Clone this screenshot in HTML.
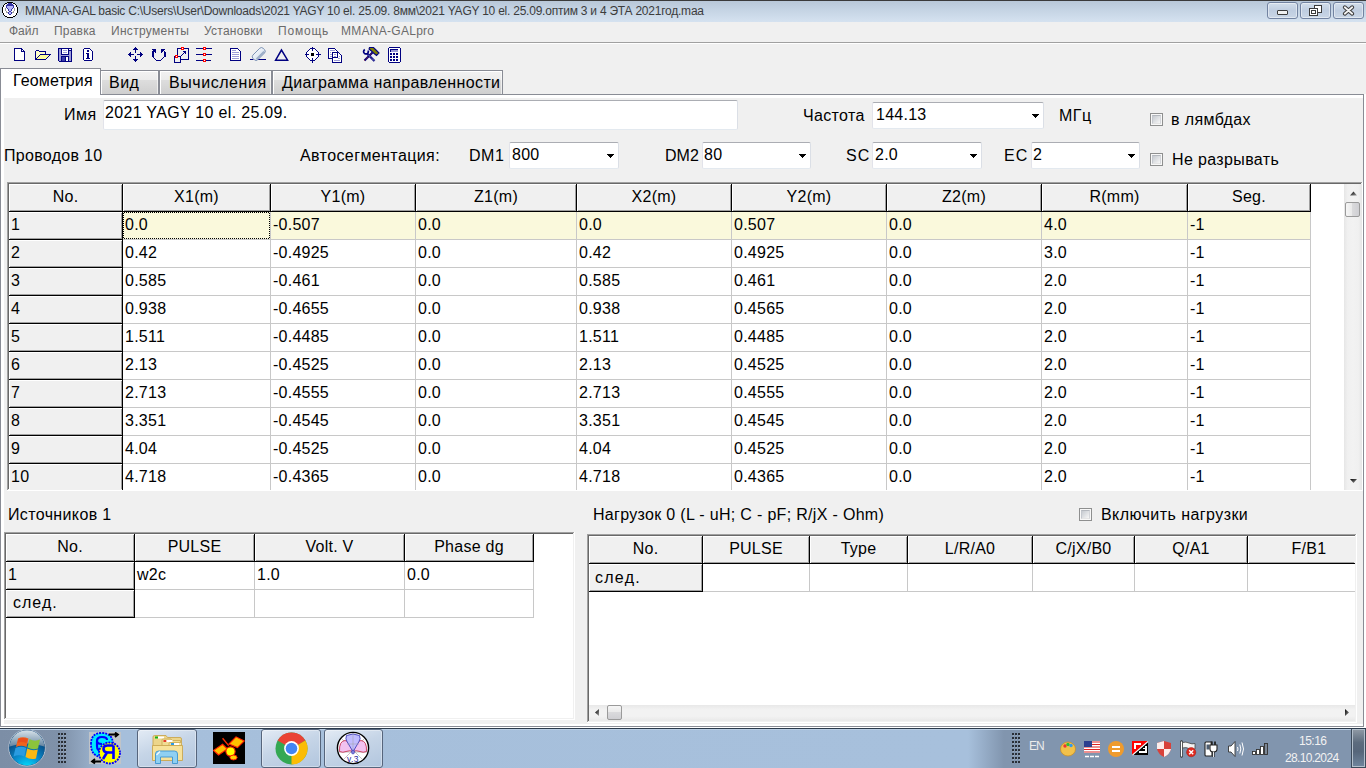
<!DOCTYPE html>
<html><head><meta charset="utf-8"><title>MMANA-GAL</title>
<style>
html,body{margin:0;padding:0;width:1366px;height:768px;overflow:hidden;background:#f0f0f0}
body div, body span, body svg{position:absolute}
.t{font-family:"Liberation Sans",sans-serif;line-height:20px;white-space:pre;height:20px}
</style></head><body>
<div style="left:0;top:0;width:1366px;height:768px;background:#f0f0f0"></div>
<div style="left:0px;top:0px;width:1366px;height:1px;background:#3a3a3a"></div>
<div style="left:0px;top:1px;width:1366px;height:21px;background:linear-gradient(#b8c7d8,#c4d3e3 40%,#d5e2f0)"></div>
<svg style="left:0;top:0" width="20" height="20" viewBox="0 0 20 20" shape-rendering="crispEdges"><rect x="7" y="3" width="6" height="1" fill="#fff"/><rect x="5" y="4" width="10" height="1" fill="#fff"/><rect x="4" y="5" width="12" height="1" fill="#fff"/><rect x="4" y="6" width="12" height="1" fill="#fff"/><rect x="3" y="7" width="14" height="1" fill="#fff"/><rect x="3" y="8" width="14" height="1" fill="#fff"/><rect x="3" y="9" width="14" height="1" fill="#fff"/><rect x="3" y="10" width="14" height="1" fill="#fff"/><rect x="3" y="11" width="14" height="1" fill="#fff"/><rect x="3" y="12" width="14" height="1" fill="#fff"/><rect x="4" y="13" width="12" height="1" fill="#fff"/><rect x="4" y="14" width="12" height="1" fill="#fff"/><rect x="5" y="15" width="10" height="1" fill="#fff"/><rect x="7" y="16" width="6" height="1" fill="#fff"/><rect x="7" y="2" width="6" height="1" fill="#000"/><rect x="5" y="3" width="2" height="1" fill="#000"/><rect x="13" y="3" width="2" height="1" fill="#000"/><rect x="8" y="3" width="4" height="1" fill="#3434a4"/><rect x="4" y="4" width="1" height="1" fill="#000"/><rect x="15" y="4" width="1" height="1" fill="#000"/><rect x="7" y="4" width="6" height="1" fill="#3434a4"/><rect x="3" y="5" width="1" height="1" fill="#000"/><rect x="16" y="5" width="1" height="1" fill="#000"/><rect x="6" y="5" width="8" height="1" fill="#3434a4"/><rect x="3" y="6" width="1" height="1" fill="#000"/><rect x="16" y="6" width="1" height="1" fill="#000"/><rect x="6" y="6" width="1" height="1" fill="#3434a4"/><rect x="7" y="6" width="6" height="1" fill="#b6b6fc"/><rect x="13" y="6" width="1" height="1" fill="#3434a4"/><rect x="2" y="7" width="1" height="1" fill="#000"/><rect x="17" y="7" width="1" height="1" fill="#000"/><rect x="6" y="7" width="1" height="1" fill="#3434a4"/><rect x="7" y="7" width="6" height="1" fill="#b6b6fc"/><rect x="13" y="7" width="1" height="1" fill="#3434a4"/><rect x="2" y="8" width="1" height="1" fill="#000"/><rect x="17" y="8" width="1" height="1" fill="#000"/><rect x="7" y="8" width="1" height="1" fill="#3434a4"/><rect x="8" y="8" width="4" height="1" fill="#b6b6fc"/><rect x="12" y="8" width="1" height="1" fill="#3434a4"/><rect x="5" y="8" width="1" height="1" fill="#9a9a9a"/><rect x="14" y="8" width="1" height="1" fill="#9a9a9a"/><rect x="2" y="9" width="1" height="1" fill="#000"/><rect x="17" y="9" width="1" height="1" fill="#000"/><rect x="8" y="9" width="1" height="1" fill="#3434a4"/><rect x="9" y="9" width="2" height="1" fill="#b6b6fc"/><rect x="11" y="9" width="1" height="1" fill="#3434a4"/><rect x="5" y="9" width="1" height="1" fill="#9a9a9a"/><rect x="14" y="9" width="1" height="1" fill="#9a9a9a"/><rect x="2" y="10" width="1" height="1" fill="#000"/><rect x="17" y="10" width="1" height="1" fill="#000"/><rect x="8" y="10" width="1" height="1" fill="#3434a4"/><rect x="9" y="10" width="2" height="1" fill="#b6b6fc"/><rect x="11" y="10" width="1" height="1" fill="#3434a4"/><rect x="5" y="10" width="1" height="1" fill="#9a9a9a"/><rect x="14" y="10" width="1" height="1" fill="#9a9a9a"/><rect x="2" y="11" width="1" height="1" fill="#000"/><rect x="17" y="11" width="1" height="1" fill="#000"/><rect x="9" y="11" width="2" height="1" fill="#3434a4"/><rect x="6" y="11" width="1" height="1" fill="#9a9a9a"/><rect x="13" y="11" width="1" height="1" fill="#9a9a9a"/><rect x="2" y="12" width="1" height="1" fill="#000"/><rect x="17" y="12" width="1" height="1" fill="#000"/><rect x="8" y="12" width="1" height="1" fill="#3434a4"/><rect x="9" y="12" width="2" height="1" fill="#b6b6fc"/><rect x="11" y="12" width="1" height="1" fill="#3434a4"/><rect x="6" y="12" width="2" height="1" fill="#9a9a9a"/><rect x="12" y="12" width="2" height="1" fill="#9a9a9a"/><rect x="3" y="13" width="1" height="1" fill="#000"/><rect x="16" y="13" width="1" height="1" fill="#000"/><rect x="8" y="13" width="1" height="1" fill="#3434a4"/><rect x="9" y="13" width="2" height="1" fill="#b6b6fc"/><rect x="11" y="13" width="1" height="1" fill="#3434a4"/><rect x="3" y="14" width="1" height="1" fill="#000"/><rect x="16" y="14" width="1" height="1" fill="#000"/><rect x="9" y="14" width="2" height="1" fill="#3434a4"/><rect x="4" y="15" width="1" height="1" fill="#000"/><rect x="15" y="15" width="1" height="1" fill="#000"/><rect x="5" y="16" width="2" height="1" fill="#000"/><rect x="13" y="16" width="2" height="1" fill="#000"/><rect x="7" y="17" width="6" height="1" fill="#000"/></svg>
<span class="t" style="left:25px;top:1px;font-size:12px;color:#3c3c3c;letter-spacing:-0.231px;">MMANA-GAL basic C:\Users\User\Downloads\2021 YAGY 10 el. 25.09. 8мм\2021 YAGY 10 el. 25.09.оптим 3 и 4 ЭТА 2021год.maa</span>
<div style="left:1267px;top:2px;width:31px;height:17px;border:1px solid #7283a1;border-radius:3px;box-sizing:border-box;background:linear-gradient(#d2deeb,#bfcde0 50%,#c9d6e6);box-shadow:inset 0 0 0 1px rgba(255,255,255,.45)"></div>
<div style="left:1300px;top:2px;width:31px;height:17px;border:1px solid #7283a1;border-radius:3px;box-sizing:border-box;background:linear-gradient(#d2deeb,#bfcde0 50%,#c9d6e6);box-shadow:inset 0 0 0 1px rgba(255,255,255,.45)"></div>
<div style="left:1333px;top:2px;width:31px;height:17px;border:1px solid #7283a1;border-radius:3px;box-sizing:border-box;background:linear-gradient(#d2deeb,#bfcde0 50%,#c9d6e6);box-shadow:inset 0 0 0 1px rgba(255,255,255,.45)"></div>
<div style="left:1277px;top:10px;width:11px;height:5px;background:#f0f0f0;border:1px solid #3c3c3c;border-radius:1px;box-sizing:border-box"></div>
<div style="left:1314px;top:5px;width:8px;height:8px;background:#fff;border:1px solid #3c3c3c;box-sizing:border-box"></div>
<div style="left:1309px;top:8px;width:9px;height:8px;background:#fff;border:1px solid #3c3c3c;box-sizing:border-box"></div>
<div style="left:1311px;top:10px;width:5px;height:4px;background:#fff;border:1px solid #3c3c3c;box-sizing:border-box"></div>
<svg style="left:1342px;top:5px" width="13" height="11" viewBox="0 0 13 11">
<path d="M2.8 2.3 L10.2 8.7 M10.2 2.3 L2.8 8.7" stroke="#3c3c3c" stroke-width="3.8" stroke-linecap="round"/>
<path d="M2.8 2.3 L10.2 8.7 M10.2 2.3 L2.8 8.7" stroke="#f4f4f4" stroke-width="1.8" stroke-linecap="round"/>
</svg>
<span class="t" style="left:9px;top:21px;font-size:12px;color:#6b6b6b;letter-spacing:0.0px;">Файл</span>
<span class="t" style="left:54px;top:21px;font-size:12px;color:#6b6b6b;letter-spacing:0.2px;">Правка</span>
<span class="t" style="left:111px;top:21px;font-size:12px;color:#6b6b6b;letter-spacing:0.3px;">Инструменты</span>
<span class="t" style="left:204px;top:21px;font-size:12px;color:#6b6b6b;letter-spacing:0.25px;">Установки</span>
<span class="t" style="left:278px;top:21px;font-size:12px;color:#6b6b6b;letter-spacing:0.8px;">Помощь</span>
<span class="t" style="left:341px;top:21px;font-size:12px;color:#6b6b6b;letter-spacing:0.273px;">MMANA-GALpro</span>
<div style="left:0px;top:42px;width:1366px;height:1px;background:#a0a0a0"></div>
<div style="left:0px;top:43px;width:1366px;height:1px;background:#ffffff"></div>
<svg style="left:0;top:44px" width="410" height="24" viewBox="0 44 410 24" shape-rendering="crispEdges"><rect x="15" y="49" width="9" height="11" fill="#ffffff"/><rect x="22" y="51" width="2" height="1" fill="#ffffff"/><rect x="14" y="48" width="8" height="1" fill="#000080"/><rect x="14" y="48" width="1" height="13" fill="#000080"/><rect x="14" y="60" width="11" height="1" fill="#000080"/><rect x="24" y="51" width="1" height="10" fill="#000080"/><rect x="21" y="48" width="1" height="4" fill="#000080"/><rect x="21" y="51" width="4" height="1" fill="#000080"/><rect x="22" y="49" width="1" height="1" fill="#000080"/><rect x="23" y="50" width="1" height="1" fill="#000080"/><rect x="22" y="50" width="1" height="1" fill="#ffffff"/><rect x="36" y="51" width="3" height="8" fill="#ffffc8"/><rect x="39" y="52" width="6" height="2" fill="#ffffc8"/><rect x="36" y="50" width="3" height="1" fill="#000080"/><rect x="35" y="51" width="1" height="9" fill="#000080"/><rect x="39" y="51" width="7" height="1" fill="#000080"/><rect x="45" y="51" width="1" height="3" fill="#000080"/><rect x="40" y="54" width="11" height="1" fill="#000080"/><rect x="39" y="55" width="1" height="1" fill="#000080"/><rect x="40" y="55" width="9" height="1" fill="#ffff99"/><rect x="49" y="55" width="1" height="1" fill="#000080"/><rect x="38" y="56" width="1" height="1" fill="#000080"/><rect x="39" y="56" width="9" height="1" fill="#ffff99"/><rect x="48" y="56" width="1" height="1" fill="#000080"/><rect x="37" y="57" width="1" height="1" fill="#000080"/><rect x="38" y="57" width="9" height="1" fill="#ffff99"/><rect x="47" y="57" width="1" height="1" fill="#000080"/><rect x="36" y="58" width="1" height="1" fill="#000080"/><rect x="37" y="58" width="9" height="1" fill="#ffff99"/><rect x="46" y="58" width="1" height="1" fill="#000080"/><rect x="35" y="59" width="11" height="1" fill="#000080"/><rect x="58" y="48" width="14" height="14" fill="#000080"/><rect x="59" y="49" width="2" height="12" fill="#9c9cd8"/><rect x="69" y="51" width="2" height="10" fill="#9c9cd8"/><rect x="61" y="55" width="8" height="1" fill="#9c9cd8"/><rect x="62" y="49" width="6" height="5" fill="#ffffff"/><rect x="63" y="50" width="4" height="1" fill="#9c9cd8"/><rect x="63" y="52" width="4" height="1" fill="#9c9cd8"/><rect x="62" y="57" width="3" height="4" fill="#3a3aa8"/><rect x="66" y="57" width="2" height="4" fill="#ffffff"/><rect x="69" y="49" width="2" height="1" fill="#ffffff"/><rect x="58" y="61" width="1" height="1" fill="#f0f0f0"/><rect x="84" y="49" width="7" height="11" fill="#ffffff"/><rect x="91" y="51" width="1" height="9" fill="#ffffff"/><rect x="84" y="48" width="6" height="1" fill="#000080"/><rect x="83" y="49" width="1" height="11" fill="#000080"/><rect x="84" y="60" width="8" height="1" fill="#000080"/><rect x="92" y="51" width="1" height="9" fill="#000080"/><rect x="90" y="49" width="1" height="1" fill="#000080"/><rect x="91" y="50" width="1" height="1" fill="#000080"/><rect x="87" y="50" width="2" height="2" fill="#000080"/><rect x="86" y="53" width="3" height="1" fill="#000080"/><rect x="87" y="53" width="1" height="6" fill="#000080"/><rect x="88" y="53" width="1" height="6" fill="#000080"/><rect x="86" y="58" width="4" height="1" fill="#000080"/><rect x="135" y="47" width="1" height="1" fill="#000080"/><rect x="134" y="48" width="3" height="1" fill="#000080"/><rect x="133" y="49" width="5" height="1" fill="#000080"/><rect x="135" y="50" width="1" height="3" fill="#000080"/><rect x="135" y="56" width="1" height="3" fill="#000080"/><rect x="133" y="59" width="5" height="1" fill="#000080"/><rect x="134" y="60" width="3" height="1" fill="#000080"/><rect x="135" y="61" width="1" height="1" fill="#000080"/><rect x="128" y="54" width="1" height="1" fill="#000080"/><rect x="129" y="53" width="1" height="3" fill="#000080"/><rect x="130" y="52" width="1" height="5" fill="#000080"/><rect x="131" y="54" width="3" height="1" fill="#000080"/><rect x="137" y="54" width="3" height="1" fill="#000080"/><rect x="140" y="52" width="1" height="5" fill="#000080"/><rect x="141" y="53" width="1" height="3" fill="#000080"/><rect x="142" y="54" width="1" height="1" fill="#000080"/><rect x="152" y="49" width="4" height="1" fill="#000080"/><rect x="153" y="50" width="3" height="1" fill="#000080"/><rect x="155" y="51" width="1" height="2" fill="#000080"/><rect x="154" y="51" width="1" height="1" fill="#000080"/><rect x="152" y="51" width="1" height="6" fill="#000080"/><rect x="153" y="57" width="1" height="1" fill="#000080"/><rect x="154" y="58" width="1" height="1" fill="#000080"/><rect x="155" y="59" width="1" height="1" fill="#000080"/><rect x="156" y="60" width="5" height="1" fill="#000080"/><rect x="161" y="59" width="1" height="1" fill="#000080"/><rect x="162" y="58" width="1" height="1" fill="#000080"/><rect x="163" y="57" width="1" height="1" fill="#000080"/><rect x="164" y="51" width="1" height="6" fill="#000080"/><rect x="165" y="52" width="1" height="5" fill="#000080"/><rect x="161" y="49" width="4" height="1" fill="#000080"/><rect x="161" y="50" width="3" height="1" fill="#000080"/><rect x="161" y="51" width="1" height="2" fill="#000080"/><rect x="162" y="51" width="1" height="1" fill="#000080"/><rect x="153" y="51" width="1" height="6" fill="#000080"/><rect x="177" y="48" width="12" height="1" fill="#000080"/><rect x="177" y="48" width="1" height="8" fill="#000080"/><rect x="188" y="48" width="1" height="12" fill="#000080"/><rect x="181" y="59" width="8" height="1" fill="#000080"/><rect x="174" y="56" width="7" height="1" fill="#000080"/><rect x="174" y="56" width="1" height="7" fill="#000080"/><rect x="180" y="56" width="1" height="7" fill="#000080"/><rect x="174" y="62" width="7" height="1" fill="#000080"/><rect x="181" y="55" width="1" height="1" fill="#000080"/><rect x="182" y="54" width="1" height="1" fill="#000080"/><rect x="183" y="53" width="1" height="1" fill="#000080"/><rect x="184" y="52" width="1" height="1" fill="#000080"/><rect x="183" y="51" width="3" height="1" fill="#000080"/><rect x="185" y="51" width="1" height="3" fill="#000080"/><rect x="181" y="47" width="3" height="3" fill="#ff0000"/><rect x="182" y="48" width="1" height="1" fill="#ffffff"/><rect x="175" y="55" width="3" height="3" fill="#ff0000"/><rect x="176" y="56" width="1" height="1" fill="#ffffff"/><rect x="196" y="48" width="16" height="1" fill="#000080"/><rect x="196" y="54" width="16" height="1" fill="#000080"/><rect x="196" y="60" width="15" height="1" fill="#000080"/><rect x="203" y="47" width="3" height="3" fill="#ff0000"/><rect x="204" y="48" width="1" height="1" fill="#ffffff"/><rect x="203" y="53" width="3" height="3" fill="#ff0000"/><rect x="204" y="54" width="1" height="1" fill="#ffffff"/><rect x="203" y="59" width="3" height="3" fill="#ff0000"/><rect x="204" y="60" width="1" height="1" fill="#ffffff"/><rect x="231" y="49" width="9" height="11" fill="#ffffff"/><rect x="230" y="48" width="8" height="1" fill="#000080"/><rect x="230" y="48" width="1" height="13" fill="#000080"/><rect x="230" y="60" width="11" height="1" fill="#000080"/><rect x="240" y="51" width="1" height="10" fill="#000080"/><rect x="238" y="49" width="1" height="1" fill="#000080"/><rect x="239" y="50" width="1" height="1" fill="#000080"/><rect x="232" y="50" width="4" height="1" fill="#9c9cd8"/><rect x="232" y="52" width="7" height="1" fill="#9c9cd8"/><rect x="232" y="54" width="7" height="1" fill="#9c9cd8"/><rect x="232" y="56" width="7" height="1" fill="#9c9cd8"/><rect x="232" y="58" width="7" height="1" fill="#9c9cd8"/><rect x="310" y="48" width="5" height="1" fill="#000080"/><rect x="310" y="60" width="5" height="1" fill="#000080"/><rect x="306" y="52" width="1" height="5" fill="#000080"/><rect x="318" y="52" width="1" height="5" fill="#000080"/><rect x="309" y="49" width="1" height="1" fill="#000080"/><rect x="308" y="50" width="1" height="1" fill="#000080"/><rect x="307" y="51" width="1" height="1" fill="#000080"/><rect x="315" y="49" width="1" height="1" fill="#000080"/><rect x="316" y="50" width="1" height="1" fill="#000080"/><rect x="317" y="51" width="1" height="1" fill="#000080"/><rect x="307" y="57" width="1" height="1" fill="#000080"/><rect x="308" y="58" width="1" height="1" fill="#000080"/><rect x="309" y="59" width="1" height="1" fill="#000080"/><rect x="317" y="57" width="1" height="1" fill="#000080"/><rect x="316" y="58" width="1" height="1" fill="#000080"/><rect x="315" y="59" width="1" height="1" fill="#000080"/><rect x="307" y="52" width="11" height="5" fill="#ffffff"/><rect x="308" y="50" width="9" height="9" fill="#ffffff"/><rect x="310" y="49" width="5" height="11" fill="#ffffff"/><rect x="310" y="48" width="5" height="1" fill="#000080"/><rect x="310" y="60" width="5" height="1" fill="#000080"/><rect x="306" y="52" width="1" height="5" fill="#000080"/><rect x="318" y="52" width="1" height="5" fill="#000080"/><rect x="309" y="49" width="1" height="1" fill="#000080"/><rect x="308" y="50" width="1" height="1" fill="#000080"/><rect x="307" y="51" width="1" height="1" fill="#000080"/><rect x="315" y="49" width="1" height="1" fill="#000080"/><rect x="316" y="50" width="1" height="1" fill="#000080"/><rect x="317" y="51" width="1" height="1" fill="#000080"/><rect x="307" y="57" width="1" height="1" fill="#000080"/><rect x="308" y="58" width="1" height="1" fill="#000080"/><rect x="309" y="59" width="1" height="1" fill="#000080"/><rect x="317" y="57" width="1" height="1" fill="#000080"/><rect x="316" y="58" width="1" height="1" fill="#000080"/><rect x="315" y="59" width="1" height="1" fill="#000080"/><rect x="312" y="47" width="1" height="4" fill="#000080"/><rect x="312" y="58" width="1" height="5" fill="#000080"/><rect x="305" y="54" width="4" height="1" fill="#000080"/><rect x="316" y="54" width="5" height="1" fill="#000080"/><rect x="311" y="53" width="3" height="3" fill="#000"/><rect x="329" y="49" width="8" height="9" fill="#ffffff"/><rect x="328" y="48" width="7" height="1" fill="#000080"/><rect x="328" y="48" width="1" height="11" fill="#000080"/><rect x="328" y="58" width="6" height="1" fill="#000080"/><rect x="337" y="51" width="1" height="1" fill="#000080"/><rect x="335" y="49" width="1" height="1" fill="#000080"/><rect x="336" y="50" width="1" height="1" fill="#000080"/><rect x="330" y="50" width="5" height="1" fill="#9c9cd8"/><rect x="330" y="52" width="1" height="1" fill="#9c9cd8"/><rect x="330" y="54" width="2" height="1" fill="#9c9cd8"/><rect x="330" y="56" width="2" height="1" fill="#9c9cd8"/><rect x="333" y="53" width="8" height="9" fill="#ffffff"/><rect x="332" y="52" width="7" height="1" fill="#000080"/><rect x="332" y="52" width="1" height="11" fill="#000080"/><rect x="332" y="62" width="10" height="1" fill="#000080"/><rect x="341" y="55" width="1" height="8" fill="#000080"/><rect x="339" y="53" width="1" height="1" fill="#000080"/><rect x="340" y="54" width="1" height="1" fill="#000080"/><rect x="337" y="52" width="1" height="6" fill="#000080"/><rect x="332" y="57" width="6" height="1" fill="#000080"/><rect x="334" y="54" width="2" height="1" fill="#9c9cd8"/><rect x="334" y="56" width="2" height="1" fill="#9c9cd8"/><rect x="339" y="56" width="1" height="1" fill="#9c9cd8"/><rect x="338" y="58" width="2" height="1" fill="#9c9cd8"/><rect x="334" y="60" width="6" height="1" fill="#9c9cd8"/><rect x="389" y="48" width="11" height="14" fill="#ffffff"/><rect x="389" y="47" width="11" height="1" fill="#000080"/><rect x="389" y="62" width="11" height="1" fill="#000080"/><rect x="388" y="48" width="1" height="14" fill="#000080"/><rect x="400" y="48" width="1" height="14" fill="#000080"/><rect x="390" y="49" width="8" height="1" fill="#000080"/><rect x="390" y="49" width="1" height="3" fill="#000080"/><rect x="391" y="50" width="7" height="2" fill="#9c9cd8"/><rect x="390" y="53" width="2" height="2" fill="#000080"/><rect x="393" y="53" width="2" height="2" fill="#000080"/><rect x="396" y="53" width="2" height="2" fill="#000080"/><rect x="390" y="56" width="2" height="2" fill="#000080"/><rect x="393" y="56" width="2" height="2" fill="#000080"/><rect x="396" y="56" width="2" height="2" fill="#000080"/><rect x="390" y="59" width="2" height="2" fill="#000080"/><rect x="393" y="59" width="2" height="2" fill="#000080"/><rect x="396" y="59" width="2" height="2" fill="#000080"/></svg>
<svg style="left:0;top:44px" width="410" height="24" viewBox="0 44 410 24">
<path d="M250 59.5 H253.5 M257.5 59.5 H266" stroke="#000080" stroke-width="1.2"/>
<defs><linearGradient id="er" x1="0" y1="0" x2="1" y2="1"><stop offset="0" stop-color="#ffffff"/><stop offset="0.6" stop-color="#dfe8f2"/><stop offset="1" stop-color="#8fa4c0"/></linearGradient></defs>
<path d="M252.8 55.2 L259.8 48.2 Q261.5 46.8 263.2 48.3 L264.6 49.7 Q266 51.3 264.6 52.9 L257.6 59.9 Q256 61.2 254.4 59.8 L253 58.4 Q251.5 56.8 252.8 55.2 Z" fill="url(#er)" stroke="#6f88ad" stroke-width="0.9"/>
<path d="M256.5 59 L264 51.5" stroke="#7d93b3" stroke-width="1.6" opacity="0.7"/>
<path d="M281.5 50 L275.6 60.2 H287.6 Z" fill="none" stroke="#000080" stroke-width="1.5" stroke-linejoin="miter"/>
<path d="M364.5 60.5 L372.5 52.5" stroke="#000080" stroke-width="2.2"/>
<path d="M364.5 60.5 L372.5 52.5" stroke="#a01010" stroke-width="0.9" stroke-dasharray="1 1"/>
<path d="M369.5 47.5 H373.5 L376 50 L379 53 L376.5 55.5 L373.5 53 L371.5 51 L369 49 Z" fill="#808000" stroke="#000080" stroke-width="1.1"/>
<path d="M367 53.5 L374.5 61" stroke="#000080" stroke-width="2.2"/>
<path d="M367 53.5 L374.5 61" stroke="#fff" stroke-width="0.8" stroke-dasharray="1 1"/>
<path d="M364.8 49.5 Q362.5 51.5 364.5 53.5 Q366.5 54.5 368 53 L368.5 50.5" fill="none" stroke="#000080" stroke-width="1.7"/>
</svg>
<div style="left:0px;top:94px;width:1364px;height:1px;background:#898c95"></div>
<div style="left:0px;top:68px;width:1px;height:659px;background:#898c95"></div>
<div style="left:1363px;top:94px;width:1px;height:633px;background:#898c95"></div>
<div style="left:0px;top:726px;width:1364px;height:1px;background:#898c95"></div>
<div style="left:1px;top:95px;width:1362px;height:3px;background:#ffffff"></div>
<div style="left:1px;top:95px;width:3px;height:631px;background:#ffffff"></div>
<div style="left:1px;top:724px;width:1362px;height:2px;background:#ffffff"></div>
<div style="left:1364px;top:94px;width:2px;height:634px;background:#ffffff"></div>
<div style="left:0px;top:727px;width:1366px;height:1px;background:#ffffff"></div>
<div style="left:0px;top:68px;width:101px;height:1px;background:#898c95"></div>
<div style="left:100px;top:68px;width:1px;height:27px;background:#898c95"></div>
<div style="left:1px;top:69px;width:99px;height:29px;background:#ffffff"></div>
<span class="t" style="left:13px;top:71px;font-size:16px;color:#000;letter-spacing:0.125px;">Геометрия</span>
<div style="left:100px;top:70px;width:59px;height:1px;background:#898c95"></div>
<div style="left:158px;top:70px;width:1px;height:25px;background:#898c95"></div>
<div style="left:101px;top:71px;width:57px;height:23px;background:linear-gradient(#f2f2f2 0%,#ebebeb 39%,#dddddd 41%,#cfcfcf 100%);box-shadow:inset 1px 1px 0 #fff,inset -1px 0 0 rgba(255,255,255,.6)"></div>
<span class="t" style="left:109px;top:73px;font-size:16px;color:#000;letter-spacing:0.5px;">Вид</span>
<div style="left:159px;top:70px;width:113px;height:1px;background:#898c95"></div>
<div style="left:271px;top:70px;width:1px;height:25px;background:#898c95"></div>
<div style="left:159px;top:70px;width:1px;height:25px;background:#898c95"></div>
<div style="left:160px;top:71px;width:111px;height:23px;background:linear-gradient(#f2f2f2 0%,#ebebeb 39%,#dddddd 41%,#cfcfcf 100%);box-shadow:inset 1px 1px 0 #fff,inset -1px 0 0 rgba(255,255,255,.6)"></div>
<span class="t" style="left:169px;top:73px;font-size:16px;color:#000;letter-spacing:0.556px;">Вычисления</span>
<div style="left:272px;top:70px;width:231px;height:1px;background:#898c95"></div>
<div style="left:502px;top:70px;width:1px;height:25px;background:#898c95"></div>
<div style="left:272px;top:70px;width:1px;height:25px;background:#898c95"></div>
<div style="left:273px;top:71px;width:229px;height:23px;background:linear-gradient(#f2f2f2 0%,#ebebeb 39%,#dddddd 41%,#cfcfcf 100%);box-shadow:inset 1px 1px 0 #fff,inset -1px 0 0 rgba(255,255,255,.6)"></div>
<span class="t" style="left:282px;top:73px;font-size:16px;color:#000;letter-spacing:0.391px;">Диаграмма направленности</span>
<span class="t" style="left:64px;top:105px;font-size:16px;color:#000;letter-spacing:0.5px;">Имя</span>
<div style="left:103px;top:100px;width:635px;height:30px;background:#fff;border:1px solid;border-color:#abadb3 #dbdfe6 #e3e9ef #e2e3ea;border-radius:2px;box-sizing:border-box"></div>
<span class="t" style="left:105px;top:103px;font-size:16px;color:#000;letter-spacing:0.318px;">2021 YAGY 10 el. 25.09.</span>
<span class="t" style="left:803px;top:106px;font-size:16px;color:#000;letter-spacing:0.333px;">Частота</span>
<div style="left:872px;top:102px;width:172px;height:27px;background:#fff;border:1px solid;border-color:#abadb3 #dbdfe6 #e3e9ef #e2e3ea;border-radius:2px;box-sizing:border-box"></div>
<svg style="left:1032px;top:114px" width="7" height="4" viewBox="0 0 7 4" shape-rendering="crispEdges"><rect x="0" y="0" width="7" height="1" fill="#000"/><rect x="1" y="1" width="5" height="1" fill="#000"/><rect x="2" y="2" width="3" height="1" fill="#000"/><rect x="3" y="3" width="1" height="1" fill="#000"/></svg>
<span class="t" style="left:876px;top:105px;font-size:16px;color:#000;letter-spacing:0.25px;">144.13</span>
<span class="t" style="left:1059px;top:106px;font-size:16px;color:#000;letter-spacing:0.5px;">МГц</span>
<div style="left:1150px;top:113px;width:13px;height:13px;border:1px solid #8e8f8f;box-sizing:border-box;background:#f8f8f8"></div>
<div style="left:1152px;top:115px;width:9px;height:9px;border:1px solid;border-color:#b4b8be #d4d6da #e4e4e4 #c4c8ce;box-sizing:border-box;background:linear-gradient(135deg,#c6cad0,#f6f6f6)"></div>
<span class="t" style="left:1171px;top:110px;font-size:16px;color:#000;letter-spacing:0.375px;">в лямбдах</span>
<span class="t" style="left:4px;top:146px;font-size:16px;color:#000;letter-spacing:0.3px;">Проводов 10</span>
<span class="t" style="left:300px;top:146px;font-size:16px;color:#000;letter-spacing:0.4px;">Автосегментация:</span>
<span class="t" style="left:469px;top:146px;font-size:16px;color:#000;letter-spacing:0.5px;">DM1</span>
<div style="left:509px;top:142px;width:110px;height:27px;background:#fff;border:1px solid;border-color:#abadb3 #dbdfe6 #e3e9ef #e2e3ea;border-radius:2px;box-sizing:border-box"></div>
<svg style="left:607px;top:154px" width="7" height="4" viewBox="0 0 7 4" shape-rendering="crispEdges"><rect x="0" y="0" width="7" height="1" fill="#000"/><rect x="1" y="1" width="5" height="1" fill="#000"/><rect x="2" y="2" width="3" height="1" fill="#000"/><rect x="3" y="3" width="1" height="1" fill="#000"/></svg>
<span class="t" style="left:512px;top:145px;font-size:16px;color:#000;letter-spacing:0.25px;">800</span>
<span class="t" style="left:665px;top:146px;font-size:16px;color:#000;letter-spacing:0.0px;">DM2</span>
<div style="left:702px;top:142px;width:109px;height:27px;background:#fff;border:1px solid;border-color:#abadb3 #dbdfe6 #e3e9ef #e2e3ea;border-radius:2px;box-sizing:border-box"></div>
<svg style="left:799px;top:154px" width="7" height="4" viewBox="0 0 7 4" shape-rendering="crispEdges"><rect x="0" y="0" width="7" height="1" fill="#000"/><rect x="1" y="1" width="5" height="1" fill="#000"/><rect x="2" y="2" width="3" height="1" fill="#000"/><rect x="3" y="3" width="1" height="1" fill="#000"/></svg>
<span class="t" style="left:704px;top:145px;font-size:16px;color:#000;letter-spacing:0.25px;">80</span>
<span class="t" style="left:846px;top:146px;font-size:16px;color:#000;letter-spacing:1.0px;">SC</span>
<div style="left:872px;top:142px;width:110px;height:27px;background:#fff;border:1px solid;border-color:#abadb3 #dbdfe6 #e3e9ef #e2e3ea;border-radius:2px;box-sizing:border-box"></div>
<svg style="left:970px;top:154px" width="7" height="4" viewBox="0 0 7 4" shape-rendering="crispEdges"><rect x="0" y="0" width="7" height="1" fill="#000"/><rect x="1" y="1" width="5" height="1" fill="#000"/><rect x="2" y="2" width="3" height="1" fill="#000"/><rect x="3" y="3" width="1" height="1" fill="#000"/></svg>
<span class="t" style="left:875px;top:145px;font-size:16px;color:#000;letter-spacing:0.25px;">2.0</span>
<span class="t" style="left:1004px;top:146px;font-size:16px;color:#000;letter-spacing:1.0px;">EC</span>
<div style="left:1031px;top:142px;width:109px;height:27px;background:#fff;border:1px solid;border-color:#abadb3 #dbdfe6 #e3e9ef #e2e3ea;border-radius:2px;box-sizing:border-box"></div>
<svg style="left:1128px;top:154px" width="7" height="4" viewBox="0 0 7 4" shape-rendering="crispEdges"><rect x="0" y="0" width="7" height="1" fill="#000"/><rect x="1" y="1" width="5" height="1" fill="#000"/><rect x="2" y="2" width="3" height="1" fill="#000"/><rect x="3" y="3" width="1" height="1" fill="#000"/></svg>
<span class="t" style="left:1033px;top:145px;font-size:16px;color:#000;letter-spacing:0.25px;">2</span>
<div style="left:1150px;top:153px;width:13px;height:13px;border:1px solid #8e8f8f;box-sizing:border-box;background:#f8f8f8"></div>
<div style="left:1152px;top:155px;width:9px;height:9px;border:1px solid;border-color:#b4b8be #d4d6da #e4e4e4 #c4c8ce;box-sizing:border-box;background:linear-gradient(135deg,#c6cad0,#f6f6f6)"></div>
<span class="t" style="left:1172px;top:150px;font-size:16px;color:#000;letter-spacing:0.364px;">Не разрывать</span>
<div style="left:7px;top:182px;width:1356px;height:1px;background:#a0a0a0"></div>
<div style="left:7px;top:182px;width:1px;height:309px;background:#a0a0a0"></div>
<div style="left:8px;top:183px;width:1354px;height:1px;background:#696969"></div>
<div style="left:8px;top:183px;width:1px;height:307px;background:#696969"></div>
<div style="left:7px;top:490px;width:1356px;height:1px;background:#ffffff"></div>
<div style="left:1362px;top:182px;width:1px;height:309px;background:#ffffff"></div>
<div style="left:8px;top:489px;width:1354px;height:1px;background:#f0f0f0"></div>
<div style="left:1361px;top:183px;width:1px;height:307px;background:#f0f0f0"></div>
<div style="left:9px;top:184px;width:1336px;height:306px;overflow:hidden">
<div style="left:-9px;top:-184px;width:1366px;height:768px">
<div style="left:9px;top:184px;width:1336px;height:306px;background:#ffffff"></div>
<div style="left:9px;top:184px;width:114px;height:28px;background:#f0f0f0"></div>
<div style="left:9px;top:184px;width:114px;height:1px;background:#ffffff"></div>
<div style="left:9px;top:184px;width:1px;height:28px;background:#ffffff"></div>
<div style="left:121px;top:185px;width:1px;height:26px;background:#a0a0a0"></div>
<div style="left:122px;top:184px;width:1px;height:28px;background:#000"></div>
<div style="left:10px;top:210px;width:112px;height:1px;background:#a0a0a0"></div>
<div style="left:9px;top:211px;width:114px;height:1px;background:#000"></div>
<span class="t" style="left:9px;width:113px;text-align:center;top:187px;font-size:16px;color:#000;letter-spacing:0.25px;">No.</span>
<div style="left:123px;top:184px;width:148px;height:28px;background:#f0f0f0"></div>
<div style="left:123px;top:184px;width:148px;height:1px;background:#ffffff"></div>
<div style="left:123px;top:184px;width:1px;height:28px;background:#ffffff"></div>
<div style="left:269px;top:185px;width:1px;height:26px;background:#a0a0a0"></div>
<div style="left:270px;top:184px;width:1px;height:28px;background:#000"></div>
<div style="left:124px;top:210px;width:146px;height:1px;background:#a0a0a0"></div>
<div style="left:123px;top:211px;width:148px;height:1px;background:#000"></div>
<span class="t" style="left:123px;width:147px;text-align:center;top:187px;font-size:16px;color:#000;letter-spacing:0.25px;">X1(m)</span>
<div style="left:271px;top:184px;width:145px;height:28px;background:#f0f0f0"></div>
<div style="left:271px;top:184px;width:145px;height:1px;background:#ffffff"></div>
<div style="left:271px;top:184px;width:1px;height:28px;background:#ffffff"></div>
<div style="left:414px;top:185px;width:1px;height:26px;background:#a0a0a0"></div>
<div style="left:415px;top:184px;width:1px;height:28px;background:#000"></div>
<div style="left:272px;top:210px;width:143px;height:1px;background:#a0a0a0"></div>
<div style="left:271px;top:211px;width:145px;height:1px;background:#000"></div>
<span class="t" style="left:271px;width:144px;text-align:center;top:187px;font-size:16px;color:#000;letter-spacing:0.25px;">Y1(m)</span>
<div style="left:416px;top:184px;width:161px;height:28px;background:#f0f0f0"></div>
<div style="left:416px;top:184px;width:161px;height:1px;background:#ffffff"></div>
<div style="left:416px;top:184px;width:1px;height:28px;background:#ffffff"></div>
<div style="left:575px;top:185px;width:1px;height:26px;background:#a0a0a0"></div>
<div style="left:576px;top:184px;width:1px;height:28px;background:#000"></div>
<div style="left:417px;top:210px;width:159px;height:1px;background:#a0a0a0"></div>
<div style="left:416px;top:211px;width:161px;height:1px;background:#000"></div>
<span class="t" style="left:416px;width:160px;text-align:center;top:187px;font-size:16px;color:#000;letter-spacing:0.25px;">Z1(m)</span>
<div style="left:577px;top:184px;width:155px;height:28px;background:#f0f0f0"></div>
<div style="left:577px;top:184px;width:155px;height:1px;background:#ffffff"></div>
<div style="left:577px;top:184px;width:1px;height:28px;background:#ffffff"></div>
<div style="left:730px;top:185px;width:1px;height:26px;background:#a0a0a0"></div>
<div style="left:731px;top:184px;width:1px;height:28px;background:#000"></div>
<div style="left:578px;top:210px;width:153px;height:1px;background:#a0a0a0"></div>
<div style="left:577px;top:211px;width:155px;height:1px;background:#000"></div>
<span class="t" style="left:577px;width:154px;text-align:center;top:187px;font-size:16px;color:#000;letter-spacing:0.25px;">X2(m)</span>
<div style="left:732px;top:184px;width:155px;height:28px;background:#f0f0f0"></div>
<div style="left:732px;top:184px;width:155px;height:1px;background:#ffffff"></div>
<div style="left:732px;top:184px;width:1px;height:28px;background:#ffffff"></div>
<div style="left:885px;top:185px;width:1px;height:26px;background:#a0a0a0"></div>
<div style="left:886px;top:184px;width:1px;height:28px;background:#000"></div>
<div style="left:733px;top:210px;width:153px;height:1px;background:#a0a0a0"></div>
<div style="left:732px;top:211px;width:155px;height:1px;background:#000"></div>
<span class="t" style="left:732px;width:154px;text-align:center;top:187px;font-size:16px;color:#000;letter-spacing:0.25px;">Y2(m)</span>
<div style="left:887px;top:184px;width:155px;height:28px;background:#f0f0f0"></div>
<div style="left:887px;top:184px;width:155px;height:1px;background:#ffffff"></div>
<div style="left:887px;top:184px;width:1px;height:28px;background:#ffffff"></div>
<div style="left:1040px;top:185px;width:1px;height:26px;background:#a0a0a0"></div>
<div style="left:1041px;top:184px;width:1px;height:28px;background:#000"></div>
<div style="left:888px;top:210px;width:153px;height:1px;background:#a0a0a0"></div>
<div style="left:887px;top:211px;width:155px;height:1px;background:#000"></div>
<span class="t" style="left:887px;width:154px;text-align:center;top:187px;font-size:16px;color:#000;letter-spacing:0.25px;">Z2(m)</span>
<div style="left:1042px;top:184px;width:146px;height:28px;background:#f0f0f0"></div>
<div style="left:1042px;top:184px;width:146px;height:1px;background:#ffffff"></div>
<div style="left:1042px;top:184px;width:1px;height:28px;background:#ffffff"></div>
<div style="left:1186px;top:185px;width:1px;height:26px;background:#a0a0a0"></div>
<div style="left:1187px;top:184px;width:1px;height:28px;background:#000"></div>
<div style="left:1043px;top:210px;width:144px;height:1px;background:#a0a0a0"></div>
<div style="left:1042px;top:211px;width:146px;height:1px;background:#000"></div>
<span class="t" style="left:1042px;width:145px;text-align:center;top:187px;font-size:16px;color:#000;letter-spacing:0.25px;">R(mm)</span>
<div style="left:1188px;top:184px;width:123px;height:28px;background:#f0f0f0"></div>
<div style="left:1188px;top:184px;width:123px;height:1px;background:#ffffff"></div>
<div style="left:1188px;top:184px;width:1px;height:28px;background:#ffffff"></div>
<div style="left:1309px;top:185px;width:1px;height:26px;background:#a0a0a0"></div>
<div style="left:1310px;top:184px;width:1px;height:28px;background:#000"></div>
<div style="left:1189px;top:210px;width:121px;height:1px;background:#a0a0a0"></div>
<div style="left:1188px;top:211px;width:123px;height:1px;background:#000"></div>
<span class="t" style="left:1188px;width:122px;text-align:center;top:187px;font-size:16px;color:#000;letter-spacing:0.25px;">Seg.</span>
<div style="left:9px;top:212px;width:114px;height:28px;background:#f0f0f0"></div>
<div style="left:9px;top:212px;width:114px;height:1px;background:#ffffff"></div>
<div style="left:9px;top:212px;width:1px;height:28px;background:#ffffff"></div>
<div style="left:121px;top:213px;width:1px;height:26px;background:#a0a0a0"></div>
<div style="left:10px;top:238px;width:112px;height:1px;background:#a0a0a0"></div>
<div style="left:122px;top:212px;width:1px;height:28px;background:#000"></div>
<div style="left:9px;top:239px;width:114px;height:1px;background:#000"></div>
<span class="t" style="left:11px;top:215px;font-size:16px;color:#000;letter-spacing:0.25px;">1</span>
<div style="left:123px;top:212px;width:148px;height:28px;background:#faf9dc"></div>
<div style="left:270px;top:212px;width:1px;height:28px;background:#c8c8c8"></div>
<div style="left:123px;top:239px;width:148px;height:1px;background:#c8c8c8"></div>
<span class="t" style="left:125px;top:215px;font-size:16px;color:#000;letter-spacing:0.25px;">0.0</span>
<div style="left:271px;top:212px;width:145px;height:28px;background:#faf9dc"></div>
<div style="left:415px;top:212px;width:1px;height:28px;background:#c8c8c8"></div>
<div style="left:271px;top:239px;width:145px;height:1px;background:#c8c8c8"></div>
<span class="t" style="left:273px;top:215px;font-size:16px;color:#000;letter-spacing:0.25px;">-0.507</span>
<div style="left:416px;top:212px;width:161px;height:28px;background:#faf9dc"></div>
<div style="left:576px;top:212px;width:1px;height:28px;background:#c8c8c8"></div>
<div style="left:416px;top:239px;width:161px;height:1px;background:#c8c8c8"></div>
<span class="t" style="left:418px;top:215px;font-size:16px;color:#000;letter-spacing:0.25px;">0.0</span>
<div style="left:577px;top:212px;width:155px;height:28px;background:#faf9dc"></div>
<div style="left:731px;top:212px;width:1px;height:28px;background:#c8c8c8"></div>
<div style="left:577px;top:239px;width:155px;height:1px;background:#c8c8c8"></div>
<span class="t" style="left:579px;top:215px;font-size:16px;color:#000;letter-spacing:0.25px;">0.0</span>
<div style="left:732px;top:212px;width:155px;height:28px;background:#faf9dc"></div>
<div style="left:886px;top:212px;width:1px;height:28px;background:#c8c8c8"></div>
<div style="left:732px;top:239px;width:155px;height:1px;background:#c8c8c8"></div>
<span class="t" style="left:734px;top:215px;font-size:16px;color:#000;letter-spacing:0.25px;">0.507</span>
<div style="left:887px;top:212px;width:155px;height:28px;background:#faf9dc"></div>
<div style="left:1041px;top:212px;width:1px;height:28px;background:#c8c8c8"></div>
<div style="left:887px;top:239px;width:155px;height:1px;background:#c8c8c8"></div>
<span class="t" style="left:889px;top:215px;font-size:16px;color:#000;letter-spacing:0.25px;">0.0</span>
<div style="left:1042px;top:212px;width:146px;height:28px;background:#faf9dc"></div>
<div style="left:1187px;top:212px;width:1px;height:28px;background:#c8c8c8"></div>
<div style="left:1042px;top:239px;width:146px;height:1px;background:#c8c8c8"></div>
<span class="t" style="left:1044px;top:215px;font-size:16px;color:#000;letter-spacing:0.25px;">4.0</span>
<div style="left:1188px;top:212px;width:123px;height:28px;background:#faf9dc"></div>
<div style="left:1310px;top:212px;width:1px;height:28px;background:#c8c8c8"></div>
<div style="left:1188px;top:239px;width:123px;height:1px;background:#c8c8c8"></div>
<span class="t" style="left:1190px;top:215px;font-size:16px;color:#000;letter-spacing:0.25px;">-1</span>
<div style="left:9px;top:240px;width:114px;height:28px;background:#f0f0f0"></div>
<div style="left:9px;top:240px;width:114px;height:1px;background:#ffffff"></div>
<div style="left:9px;top:240px;width:1px;height:28px;background:#ffffff"></div>
<div style="left:121px;top:241px;width:1px;height:26px;background:#a0a0a0"></div>
<div style="left:10px;top:266px;width:112px;height:1px;background:#a0a0a0"></div>
<div style="left:122px;top:240px;width:1px;height:28px;background:#000"></div>
<div style="left:9px;top:267px;width:114px;height:1px;background:#000"></div>
<span class="t" style="left:11px;top:243px;font-size:16px;color:#000;letter-spacing:0.25px;">2</span>
<div style="left:123px;top:240px;width:148px;height:28px;background:#ffffff"></div>
<div style="left:270px;top:240px;width:1px;height:28px;background:#c8c8c8"></div>
<div style="left:123px;top:267px;width:148px;height:1px;background:#c8c8c8"></div>
<span class="t" style="left:125px;top:243px;font-size:16px;color:#000;letter-spacing:0.25px;">0.42</span>
<div style="left:271px;top:240px;width:145px;height:28px;background:#ffffff"></div>
<div style="left:415px;top:240px;width:1px;height:28px;background:#c8c8c8"></div>
<div style="left:271px;top:267px;width:145px;height:1px;background:#c8c8c8"></div>
<span class="t" style="left:273px;top:243px;font-size:16px;color:#000;letter-spacing:0.25px;">-0.4925</span>
<div style="left:416px;top:240px;width:161px;height:28px;background:#ffffff"></div>
<div style="left:576px;top:240px;width:1px;height:28px;background:#c8c8c8"></div>
<div style="left:416px;top:267px;width:161px;height:1px;background:#c8c8c8"></div>
<span class="t" style="left:418px;top:243px;font-size:16px;color:#000;letter-spacing:0.25px;">0.0</span>
<div style="left:577px;top:240px;width:155px;height:28px;background:#ffffff"></div>
<div style="left:731px;top:240px;width:1px;height:28px;background:#c8c8c8"></div>
<div style="left:577px;top:267px;width:155px;height:1px;background:#c8c8c8"></div>
<span class="t" style="left:579px;top:243px;font-size:16px;color:#000;letter-spacing:0.25px;">0.42</span>
<div style="left:732px;top:240px;width:155px;height:28px;background:#ffffff"></div>
<div style="left:886px;top:240px;width:1px;height:28px;background:#c8c8c8"></div>
<div style="left:732px;top:267px;width:155px;height:1px;background:#c8c8c8"></div>
<span class="t" style="left:734px;top:243px;font-size:16px;color:#000;letter-spacing:0.25px;">0.4925</span>
<div style="left:887px;top:240px;width:155px;height:28px;background:#ffffff"></div>
<div style="left:1041px;top:240px;width:1px;height:28px;background:#c8c8c8"></div>
<div style="left:887px;top:267px;width:155px;height:1px;background:#c8c8c8"></div>
<span class="t" style="left:889px;top:243px;font-size:16px;color:#000;letter-spacing:0.25px;">0.0</span>
<div style="left:1042px;top:240px;width:146px;height:28px;background:#ffffff"></div>
<div style="left:1187px;top:240px;width:1px;height:28px;background:#c8c8c8"></div>
<div style="left:1042px;top:267px;width:146px;height:1px;background:#c8c8c8"></div>
<span class="t" style="left:1044px;top:243px;font-size:16px;color:#000;letter-spacing:0.25px;">3.0</span>
<div style="left:1188px;top:240px;width:123px;height:28px;background:#ffffff"></div>
<div style="left:1310px;top:240px;width:1px;height:28px;background:#c8c8c8"></div>
<div style="left:1188px;top:267px;width:123px;height:1px;background:#c8c8c8"></div>
<span class="t" style="left:1190px;top:243px;font-size:16px;color:#000;letter-spacing:0.25px;">-1</span>
<div style="left:9px;top:268px;width:114px;height:28px;background:#f0f0f0"></div>
<div style="left:9px;top:268px;width:114px;height:1px;background:#ffffff"></div>
<div style="left:9px;top:268px;width:1px;height:28px;background:#ffffff"></div>
<div style="left:121px;top:269px;width:1px;height:26px;background:#a0a0a0"></div>
<div style="left:10px;top:294px;width:112px;height:1px;background:#a0a0a0"></div>
<div style="left:122px;top:268px;width:1px;height:28px;background:#000"></div>
<div style="left:9px;top:295px;width:114px;height:1px;background:#000"></div>
<span class="t" style="left:11px;top:271px;font-size:16px;color:#000;letter-spacing:0.25px;">3</span>
<div style="left:123px;top:268px;width:148px;height:28px;background:#ffffff"></div>
<div style="left:270px;top:268px;width:1px;height:28px;background:#c8c8c8"></div>
<div style="left:123px;top:295px;width:148px;height:1px;background:#c8c8c8"></div>
<span class="t" style="left:125px;top:271px;font-size:16px;color:#000;letter-spacing:0.25px;">0.585</span>
<div style="left:271px;top:268px;width:145px;height:28px;background:#ffffff"></div>
<div style="left:415px;top:268px;width:1px;height:28px;background:#c8c8c8"></div>
<div style="left:271px;top:295px;width:145px;height:1px;background:#c8c8c8"></div>
<span class="t" style="left:273px;top:271px;font-size:16px;color:#000;letter-spacing:0.25px;">-0.461</span>
<div style="left:416px;top:268px;width:161px;height:28px;background:#ffffff"></div>
<div style="left:576px;top:268px;width:1px;height:28px;background:#c8c8c8"></div>
<div style="left:416px;top:295px;width:161px;height:1px;background:#c8c8c8"></div>
<span class="t" style="left:418px;top:271px;font-size:16px;color:#000;letter-spacing:0.25px;">0.0</span>
<div style="left:577px;top:268px;width:155px;height:28px;background:#ffffff"></div>
<div style="left:731px;top:268px;width:1px;height:28px;background:#c8c8c8"></div>
<div style="left:577px;top:295px;width:155px;height:1px;background:#c8c8c8"></div>
<span class="t" style="left:579px;top:271px;font-size:16px;color:#000;letter-spacing:0.25px;">0.585</span>
<div style="left:732px;top:268px;width:155px;height:28px;background:#ffffff"></div>
<div style="left:886px;top:268px;width:1px;height:28px;background:#c8c8c8"></div>
<div style="left:732px;top:295px;width:155px;height:1px;background:#c8c8c8"></div>
<span class="t" style="left:734px;top:271px;font-size:16px;color:#000;letter-spacing:0.25px;">0.461</span>
<div style="left:887px;top:268px;width:155px;height:28px;background:#ffffff"></div>
<div style="left:1041px;top:268px;width:1px;height:28px;background:#c8c8c8"></div>
<div style="left:887px;top:295px;width:155px;height:1px;background:#c8c8c8"></div>
<span class="t" style="left:889px;top:271px;font-size:16px;color:#000;letter-spacing:0.25px;">0.0</span>
<div style="left:1042px;top:268px;width:146px;height:28px;background:#ffffff"></div>
<div style="left:1187px;top:268px;width:1px;height:28px;background:#c8c8c8"></div>
<div style="left:1042px;top:295px;width:146px;height:1px;background:#c8c8c8"></div>
<span class="t" style="left:1044px;top:271px;font-size:16px;color:#000;letter-spacing:0.25px;">2.0</span>
<div style="left:1188px;top:268px;width:123px;height:28px;background:#ffffff"></div>
<div style="left:1310px;top:268px;width:1px;height:28px;background:#c8c8c8"></div>
<div style="left:1188px;top:295px;width:123px;height:1px;background:#c8c8c8"></div>
<span class="t" style="left:1190px;top:271px;font-size:16px;color:#000;letter-spacing:0.25px;">-1</span>
<div style="left:9px;top:296px;width:114px;height:28px;background:#f0f0f0"></div>
<div style="left:9px;top:296px;width:114px;height:1px;background:#ffffff"></div>
<div style="left:9px;top:296px;width:1px;height:28px;background:#ffffff"></div>
<div style="left:121px;top:297px;width:1px;height:26px;background:#a0a0a0"></div>
<div style="left:10px;top:322px;width:112px;height:1px;background:#a0a0a0"></div>
<div style="left:122px;top:296px;width:1px;height:28px;background:#000"></div>
<div style="left:9px;top:323px;width:114px;height:1px;background:#000"></div>
<span class="t" style="left:11px;top:299px;font-size:16px;color:#000;letter-spacing:0.25px;">4</span>
<div style="left:123px;top:296px;width:148px;height:28px;background:#ffffff"></div>
<div style="left:270px;top:296px;width:1px;height:28px;background:#c8c8c8"></div>
<div style="left:123px;top:323px;width:148px;height:1px;background:#c8c8c8"></div>
<span class="t" style="left:125px;top:299px;font-size:16px;color:#000;letter-spacing:0.25px;">0.938</span>
<div style="left:271px;top:296px;width:145px;height:28px;background:#ffffff"></div>
<div style="left:415px;top:296px;width:1px;height:28px;background:#c8c8c8"></div>
<div style="left:271px;top:323px;width:145px;height:1px;background:#c8c8c8"></div>
<span class="t" style="left:273px;top:299px;font-size:16px;color:#000;letter-spacing:0.25px;">-0.4655</span>
<div style="left:416px;top:296px;width:161px;height:28px;background:#ffffff"></div>
<div style="left:576px;top:296px;width:1px;height:28px;background:#c8c8c8"></div>
<div style="left:416px;top:323px;width:161px;height:1px;background:#c8c8c8"></div>
<span class="t" style="left:418px;top:299px;font-size:16px;color:#000;letter-spacing:0.25px;">0.0</span>
<div style="left:577px;top:296px;width:155px;height:28px;background:#ffffff"></div>
<div style="left:731px;top:296px;width:1px;height:28px;background:#c8c8c8"></div>
<div style="left:577px;top:323px;width:155px;height:1px;background:#c8c8c8"></div>
<span class="t" style="left:579px;top:299px;font-size:16px;color:#000;letter-spacing:0.25px;">0.938</span>
<div style="left:732px;top:296px;width:155px;height:28px;background:#ffffff"></div>
<div style="left:886px;top:296px;width:1px;height:28px;background:#c8c8c8"></div>
<div style="left:732px;top:323px;width:155px;height:1px;background:#c8c8c8"></div>
<span class="t" style="left:734px;top:299px;font-size:16px;color:#000;letter-spacing:0.25px;">0.4565</span>
<div style="left:887px;top:296px;width:155px;height:28px;background:#ffffff"></div>
<div style="left:1041px;top:296px;width:1px;height:28px;background:#c8c8c8"></div>
<div style="left:887px;top:323px;width:155px;height:1px;background:#c8c8c8"></div>
<span class="t" style="left:889px;top:299px;font-size:16px;color:#000;letter-spacing:0.25px;">0.0</span>
<div style="left:1042px;top:296px;width:146px;height:28px;background:#ffffff"></div>
<div style="left:1187px;top:296px;width:1px;height:28px;background:#c8c8c8"></div>
<div style="left:1042px;top:323px;width:146px;height:1px;background:#c8c8c8"></div>
<span class="t" style="left:1044px;top:299px;font-size:16px;color:#000;letter-spacing:0.25px;">2.0</span>
<div style="left:1188px;top:296px;width:123px;height:28px;background:#ffffff"></div>
<div style="left:1310px;top:296px;width:1px;height:28px;background:#c8c8c8"></div>
<div style="left:1188px;top:323px;width:123px;height:1px;background:#c8c8c8"></div>
<span class="t" style="left:1190px;top:299px;font-size:16px;color:#000;letter-spacing:0.25px;">-1</span>
<div style="left:9px;top:324px;width:114px;height:28px;background:#f0f0f0"></div>
<div style="left:9px;top:324px;width:114px;height:1px;background:#ffffff"></div>
<div style="left:9px;top:324px;width:1px;height:28px;background:#ffffff"></div>
<div style="left:121px;top:325px;width:1px;height:26px;background:#a0a0a0"></div>
<div style="left:10px;top:350px;width:112px;height:1px;background:#a0a0a0"></div>
<div style="left:122px;top:324px;width:1px;height:28px;background:#000"></div>
<div style="left:9px;top:351px;width:114px;height:1px;background:#000"></div>
<span class="t" style="left:11px;top:327px;font-size:16px;color:#000;letter-spacing:0.25px;">5</span>
<div style="left:123px;top:324px;width:148px;height:28px;background:#ffffff"></div>
<div style="left:270px;top:324px;width:1px;height:28px;background:#c8c8c8"></div>
<div style="left:123px;top:351px;width:148px;height:1px;background:#c8c8c8"></div>
<span class="t" style="left:125px;top:327px;font-size:16px;color:#000;letter-spacing:0.25px;">1.511</span>
<div style="left:271px;top:324px;width:145px;height:28px;background:#ffffff"></div>
<div style="left:415px;top:324px;width:1px;height:28px;background:#c8c8c8"></div>
<div style="left:271px;top:351px;width:145px;height:1px;background:#c8c8c8"></div>
<span class="t" style="left:273px;top:327px;font-size:16px;color:#000;letter-spacing:0.25px;">-0.4485</span>
<div style="left:416px;top:324px;width:161px;height:28px;background:#ffffff"></div>
<div style="left:576px;top:324px;width:1px;height:28px;background:#c8c8c8"></div>
<div style="left:416px;top:351px;width:161px;height:1px;background:#c8c8c8"></div>
<span class="t" style="left:418px;top:327px;font-size:16px;color:#000;letter-spacing:0.25px;">0.0</span>
<div style="left:577px;top:324px;width:155px;height:28px;background:#ffffff"></div>
<div style="left:731px;top:324px;width:1px;height:28px;background:#c8c8c8"></div>
<div style="left:577px;top:351px;width:155px;height:1px;background:#c8c8c8"></div>
<span class="t" style="left:579px;top:327px;font-size:16px;color:#000;letter-spacing:0.25px;">1.511</span>
<div style="left:732px;top:324px;width:155px;height:28px;background:#ffffff"></div>
<div style="left:886px;top:324px;width:1px;height:28px;background:#c8c8c8"></div>
<div style="left:732px;top:351px;width:155px;height:1px;background:#c8c8c8"></div>
<span class="t" style="left:734px;top:327px;font-size:16px;color:#000;letter-spacing:0.25px;">0.4485</span>
<div style="left:887px;top:324px;width:155px;height:28px;background:#ffffff"></div>
<div style="left:1041px;top:324px;width:1px;height:28px;background:#c8c8c8"></div>
<div style="left:887px;top:351px;width:155px;height:1px;background:#c8c8c8"></div>
<span class="t" style="left:889px;top:327px;font-size:16px;color:#000;letter-spacing:0.25px;">0.0</span>
<div style="left:1042px;top:324px;width:146px;height:28px;background:#ffffff"></div>
<div style="left:1187px;top:324px;width:1px;height:28px;background:#c8c8c8"></div>
<div style="left:1042px;top:351px;width:146px;height:1px;background:#c8c8c8"></div>
<span class="t" style="left:1044px;top:327px;font-size:16px;color:#000;letter-spacing:0.25px;">2.0</span>
<div style="left:1188px;top:324px;width:123px;height:28px;background:#ffffff"></div>
<div style="left:1310px;top:324px;width:1px;height:28px;background:#c8c8c8"></div>
<div style="left:1188px;top:351px;width:123px;height:1px;background:#c8c8c8"></div>
<span class="t" style="left:1190px;top:327px;font-size:16px;color:#000;letter-spacing:0.25px;">-1</span>
<div style="left:9px;top:352px;width:114px;height:28px;background:#f0f0f0"></div>
<div style="left:9px;top:352px;width:114px;height:1px;background:#ffffff"></div>
<div style="left:9px;top:352px;width:1px;height:28px;background:#ffffff"></div>
<div style="left:121px;top:353px;width:1px;height:26px;background:#a0a0a0"></div>
<div style="left:10px;top:378px;width:112px;height:1px;background:#a0a0a0"></div>
<div style="left:122px;top:352px;width:1px;height:28px;background:#000"></div>
<div style="left:9px;top:379px;width:114px;height:1px;background:#000"></div>
<span class="t" style="left:11px;top:355px;font-size:16px;color:#000;letter-spacing:0.25px;">6</span>
<div style="left:123px;top:352px;width:148px;height:28px;background:#ffffff"></div>
<div style="left:270px;top:352px;width:1px;height:28px;background:#c8c8c8"></div>
<div style="left:123px;top:379px;width:148px;height:1px;background:#c8c8c8"></div>
<span class="t" style="left:125px;top:355px;font-size:16px;color:#000;letter-spacing:0.25px;">2.13</span>
<div style="left:271px;top:352px;width:145px;height:28px;background:#ffffff"></div>
<div style="left:415px;top:352px;width:1px;height:28px;background:#c8c8c8"></div>
<div style="left:271px;top:379px;width:145px;height:1px;background:#c8c8c8"></div>
<span class="t" style="left:273px;top:355px;font-size:16px;color:#000;letter-spacing:0.25px;">-0.4525</span>
<div style="left:416px;top:352px;width:161px;height:28px;background:#ffffff"></div>
<div style="left:576px;top:352px;width:1px;height:28px;background:#c8c8c8"></div>
<div style="left:416px;top:379px;width:161px;height:1px;background:#c8c8c8"></div>
<span class="t" style="left:418px;top:355px;font-size:16px;color:#000;letter-spacing:0.25px;">0.0</span>
<div style="left:577px;top:352px;width:155px;height:28px;background:#ffffff"></div>
<div style="left:731px;top:352px;width:1px;height:28px;background:#c8c8c8"></div>
<div style="left:577px;top:379px;width:155px;height:1px;background:#c8c8c8"></div>
<span class="t" style="left:579px;top:355px;font-size:16px;color:#000;letter-spacing:0.25px;">2.13</span>
<div style="left:732px;top:352px;width:155px;height:28px;background:#ffffff"></div>
<div style="left:886px;top:352px;width:1px;height:28px;background:#c8c8c8"></div>
<div style="left:732px;top:379px;width:155px;height:1px;background:#c8c8c8"></div>
<span class="t" style="left:734px;top:355px;font-size:16px;color:#000;letter-spacing:0.25px;">0.4525</span>
<div style="left:887px;top:352px;width:155px;height:28px;background:#ffffff"></div>
<div style="left:1041px;top:352px;width:1px;height:28px;background:#c8c8c8"></div>
<div style="left:887px;top:379px;width:155px;height:1px;background:#c8c8c8"></div>
<span class="t" style="left:889px;top:355px;font-size:16px;color:#000;letter-spacing:0.25px;">0.0</span>
<div style="left:1042px;top:352px;width:146px;height:28px;background:#ffffff"></div>
<div style="left:1187px;top:352px;width:1px;height:28px;background:#c8c8c8"></div>
<div style="left:1042px;top:379px;width:146px;height:1px;background:#c8c8c8"></div>
<span class="t" style="left:1044px;top:355px;font-size:16px;color:#000;letter-spacing:0.25px;">2.0</span>
<div style="left:1188px;top:352px;width:123px;height:28px;background:#ffffff"></div>
<div style="left:1310px;top:352px;width:1px;height:28px;background:#c8c8c8"></div>
<div style="left:1188px;top:379px;width:123px;height:1px;background:#c8c8c8"></div>
<span class="t" style="left:1190px;top:355px;font-size:16px;color:#000;letter-spacing:0.25px;">-1</span>
<div style="left:9px;top:380px;width:114px;height:28px;background:#f0f0f0"></div>
<div style="left:9px;top:380px;width:114px;height:1px;background:#ffffff"></div>
<div style="left:9px;top:380px;width:1px;height:28px;background:#ffffff"></div>
<div style="left:121px;top:381px;width:1px;height:26px;background:#a0a0a0"></div>
<div style="left:10px;top:406px;width:112px;height:1px;background:#a0a0a0"></div>
<div style="left:122px;top:380px;width:1px;height:28px;background:#000"></div>
<div style="left:9px;top:407px;width:114px;height:1px;background:#000"></div>
<span class="t" style="left:11px;top:383px;font-size:16px;color:#000;letter-spacing:0.25px;">7</span>
<div style="left:123px;top:380px;width:148px;height:28px;background:#ffffff"></div>
<div style="left:270px;top:380px;width:1px;height:28px;background:#c8c8c8"></div>
<div style="left:123px;top:407px;width:148px;height:1px;background:#c8c8c8"></div>
<span class="t" style="left:125px;top:383px;font-size:16px;color:#000;letter-spacing:0.25px;">2.713</span>
<div style="left:271px;top:380px;width:145px;height:28px;background:#ffffff"></div>
<div style="left:415px;top:380px;width:1px;height:28px;background:#c8c8c8"></div>
<div style="left:271px;top:407px;width:145px;height:1px;background:#c8c8c8"></div>
<span class="t" style="left:273px;top:383px;font-size:16px;color:#000;letter-spacing:0.25px;">-0.4555</span>
<div style="left:416px;top:380px;width:161px;height:28px;background:#ffffff"></div>
<div style="left:576px;top:380px;width:1px;height:28px;background:#c8c8c8"></div>
<div style="left:416px;top:407px;width:161px;height:1px;background:#c8c8c8"></div>
<span class="t" style="left:418px;top:383px;font-size:16px;color:#000;letter-spacing:0.25px;">0.0</span>
<div style="left:577px;top:380px;width:155px;height:28px;background:#ffffff"></div>
<div style="left:731px;top:380px;width:1px;height:28px;background:#c8c8c8"></div>
<div style="left:577px;top:407px;width:155px;height:1px;background:#c8c8c8"></div>
<span class="t" style="left:579px;top:383px;font-size:16px;color:#000;letter-spacing:0.25px;">2.713</span>
<div style="left:732px;top:380px;width:155px;height:28px;background:#ffffff"></div>
<div style="left:886px;top:380px;width:1px;height:28px;background:#c8c8c8"></div>
<div style="left:732px;top:407px;width:155px;height:1px;background:#c8c8c8"></div>
<span class="t" style="left:734px;top:383px;font-size:16px;color:#000;letter-spacing:0.25px;">0.4555</span>
<div style="left:887px;top:380px;width:155px;height:28px;background:#ffffff"></div>
<div style="left:1041px;top:380px;width:1px;height:28px;background:#c8c8c8"></div>
<div style="left:887px;top:407px;width:155px;height:1px;background:#c8c8c8"></div>
<span class="t" style="left:889px;top:383px;font-size:16px;color:#000;letter-spacing:0.25px;">0.0</span>
<div style="left:1042px;top:380px;width:146px;height:28px;background:#ffffff"></div>
<div style="left:1187px;top:380px;width:1px;height:28px;background:#c8c8c8"></div>
<div style="left:1042px;top:407px;width:146px;height:1px;background:#c8c8c8"></div>
<span class="t" style="left:1044px;top:383px;font-size:16px;color:#000;letter-spacing:0.25px;">2.0</span>
<div style="left:1188px;top:380px;width:123px;height:28px;background:#ffffff"></div>
<div style="left:1310px;top:380px;width:1px;height:28px;background:#c8c8c8"></div>
<div style="left:1188px;top:407px;width:123px;height:1px;background:#c8c8c8"></div>
<span class="t" style="left:1190px;top:383px;font-size:16px;color:#000;letter-spacing:0.25px;">-1</span>
<div style="left:9px;top:408px;width:114px;height:28px;background:#f0f0f0"></div>
<div style="left:9px;top:408px;width:114px;height:1px;background:#ffffff"></div>
<div style="left:9px;top:408px;width:1px;height:28px;background:#ffffff"></div>
<div style="left:121px;top:409px;width:1px;height:26px;background:#a0a0a0"></div>
<div style="left:10px;top:434px;width:112px;height:1px;background:#a0a0a0"></div>
<div style="left:122px;top:408px;width:1px;height:28px;background:#000"></div>
<div style="left:9px;top:435px;width:114px;height:1px;background:#000"></div>
<span class="t" style="left:11px;top:411px;font-size:16px;color:#000;letter-spacing:0.25px;">8</span>
<div style="left:123px;top:408px;width:148px;height:28px;background:#ffffff"></div>
<div style="left:270px;top:408px;width:1px;height:28px;background:#c8c8c8"></div>
<div style="left:123px;top:435px;width:148px;height:1px;background:#c8c8c8"></div>
<span class="t" style="left:125px;top:411px;font-size:16px;color:#000;letter-spacing:0.25px;">3.351</span>
<div style="left:271px;top:408px;width:145px;height:28px;background:#ffffff"></div>
<div style="left:415px;top:408px;width:1px;height:28px;background:#c8c8c8"></div>
<div style="left:271px;top:435px;width:145px;height:1px;background:#c8c8c8"></div>
<span class="t" style="left:273px;top:411px;font-size:16px;color:#000;letter-spacing:0.25px;">-0.4545</span>
<div style="left:416px;top:408px;width:161px;height:28px;background:#ffffff"></div>
<div style="left:576px;top:408px;width:1px;height:28px;background:#c8c8c8"></div>
<div style="left:416px;top:435px;width:161px;height:1px;background:#c8c8c8"></div>
<span class="t" style="left:418px;top:411px;font-size:16px;color:#000;letter-spacing:0.25px;">0.0</span>
<div style="left:577px;top:408px;width:155px;height:28px;background:#ffffff"></div>
<div style="left:731px;top:408px;width:1px;height:28px;background:#c8c8c8"></div>
<div style="left:577px;top:435px;width:155px;height:1px;background:#c8c8c8"></div>
<span class="t" style="left:579px;top:411px;font-size:16px;color:#000;letter-spacing:0.25px;">3.351</span>
<div style="left:732px;top:408px;width:155px;height:28px;background:#ffffff"></div>
<div style="left:886px;top:408px;width:1px;height:28px;background:#c8c8c8"></div>
<div style="left:732px;top:435px;width:155px;height:1px;background:#c8c8c8"></div>
<span class="t" style="left:734px;top:411px;font-size:16px;color:#000;letter-spacing:0.25px;">0.4545</span>
<div style="left:887px;top:408px;width:155px;height:28px;background:#ffffff"></div>
<div style="left:1041px;top:408px;width:1px;height:28px;background:#c8c8c8"></div>
<div style="left:887px;top:435px;width:155px;height:1px;background:#c8c8c8"></div>
<span class="t" style="left:889px;top:411px;font-size:16px;color:#000;letter-spacing:0.25px;">0.0</span>
<div style="left:1042px;top:408px;width:146px;height:28px;background:#ffffff"></div>
<div style="left:1187px;top:408px;width:1px;height:28px;background:#c8c8c8"></div>
<div style="left:1042px;top:435px;width:146px;height:1px;background:#c8c8c8"></div>
<span class="t" style="left:1044px;top:411px;font-size:16px;color:#000;letter-spacing:0.25px;">2.0</span>
<div style="left:1188px;top:408px;width:123px;height:28px;background:#ffffff"></div>
<div style="left:1310px;top:408px;width:1px;height:28px;background:#c8c8c8"></div>
<div style="left:1188px;top:435px;width:123px;height:1px;background:#c8c8c8"></div>
<span class="t" style="left:1190px;top:411px;font-size:16px;color:#000;letter-spacing:0.25px;">-1</span>
<div style="left:9px;top:436px;width:114px;height:28px;background:#f0f0f0"></div>
<div style="left:9px;top:436px;width:114px;height:1px;background:#ffffff"></div>
<div style="left:9px;top:436px;width:1px;height:28px;background:#ffffff"></div>
<div style="left:121px;top:437px;width:1px;height:26px;background:#a0a0a0"></div>
<div style="left:10px;top:462px;width:112px;height:1px;background:#a0a0a0"></div>
<div style="left:122px;top:436px;width:1px;height:28px;background:#000"></div>
<div style="left:9px;top:463px;width:114px;height:1px;background:#000"></div>
<span class="t" style="left:11px;top:439px;font-size:16px;color:#000;letter-spacing:0.25px;">9</span>
<div style="left:123px;top:436px;width:148px;height:28px;background:#ffffff"></div>
<div style="left:270px;top:436px;width:1px;height:28px;background:#c8c8c8"></div>
<div style="left:123px;top:463px;width:148px;height:1px;background:#c8c8c8"></div>
<span class="t" style="left:125px;top:439px;font-size:16px;color:#000;letter-spacing:0.25px;">4.04</span>
<div style="left:271px;top:436px;width:145px;height:28px;background:#ffffff"></div>
<div style="left:415px;top:436px;width:1px;height:28px;background:#c8c8c8"></div>
<div style="left:271px;top:463px;width:145px;height:1px;background:#c8c8c8"></div>
<span class="t" style="left:273px;top:439px;font-size:16px;color:#000;letter-spacing:0.25px;">-0.4525</span>
<div style="left:416px;top:436px;width:161px;height:28px;background:#ffffff"></div>
<div style="left:576px;top:436px;width:1px;height:28px;background:#c8c8c8"></div>
<div style="left:416px;top:463px;width:161px;height:1px;background:#c8c8c8"></div>
<span class="t" style="left:418px;top:439px;font-size:16px;color:#000;letter-spacing:0.25px;">0.0</span>
<div style="left:577px;top:436px;width:155px;height:28px;background:#ffffff"></div>
<div style="left:731px;top:436px;width:1px;height:28px;background:#c8c8c8"></div>
<div style="left:577px;top:463px;width:155px;height:1px;background:#c8c8c8"></div>
<span class="t" style="left:579px;top:439px;font-size:16px;color:#000;letter-spacing:0.25px;">4.04</span>
<div style="left:732px;top:436px;width:155px;height:28px;background:#ffffff"></div>
<div style="left:886px;top:436px;width:1px;height:28px;background:#c8c8c8"></div>
<div style="left:732px;top:463px;width:155px;height:1px;background:#c8c8c8"></div>
<span class="t" style="left:734px;top:439px;font-size:16px;color:#000;letter-spacing:0.25px;">0.4525</span>
<div style="left:887px;top:436px;width:155px;height:28px;background:#ffffff"></div>
<div style="left:1041px;top:436px;width:1px;height:28px;background:#c8c8c8"></div>
<div style="left:887px;top:463px;width:155px;height:1px;background:#c8c8c8"></div>
<span class="t" style="left:889px;top:439px;font-size:16px;color:#000;letter-spacing:0.25px;">0.0</span>
<div style="left:1042px;top:436px;width:146px;height:28px;background:#ffffff"></div>
<div style="left:1187px;top:436px;width:1px;height:28px;background:#c8c8c8"></div>
<div style="left:1042px;top:463px;width:146px;height:1px;background:#c8c8c8"></div>
<span class="t" style="left:1044px;top:439px;font-size:16px;color:#000;letter-spacing:0.25px;">2.0</span>
<div style="left:1188px;top:436px;width:123px;height:28px;background:#ffffff"></div>
<div style="left:1310px;top:436px;width:1px;height:28px;background:#c8c8c8"></div>
<div style="left:1188px;top:463px;width:123px;height:1px;background:#c8c8c8"></div>
<span class="t" style="left:1190px;top:439px;font-size:16px;color:#000;letter-spacing:0.25px;">-1</span>
<div style="left:9px;top:464px;width:114px;height:26px;background:#f0f0f0"></div>
<div style="left:9px;top:464px;width:114px;height:1px;background:#ffffff"></div>
<div style="left:9px;top:464px;width:1px;height:26px;background:#ffffff"></div>
<div style="left:121px;top:465px;width:1px;height:24px;background:#a0a0a0"></div>
<div style="left:10px;top:490px;width:112px;height:1px;background:#a0a0a0"></div>
<div style="left:122px;top:464px;width:1px;height:26px;background:#000"></div>
<span class="t" style="left:11px;top:467px;font-size:16px;color:#000;letter-spacing:0.25px;">10</span>
<div style="left:123px;top:464px;width:148px;height:26px;background:#ffffff"></div>
<div style="left:270px;top:464px;width:1px;height:26px;background:#c8c8c8"></div>
<span class="t" style="left:125px;top:467px;font-size:16px;color:#000;letter-spacing:0.25px;">4.718</span>
<div style="left:271px;top:464px;width:145px;height:26px;background:#ffffff"></div>
<div style="left:415px;top:464px;width:1px;height:26px;background:#c8c8c8"></div>
<span class="t" style="left:273px;top:467px;font-size:16px;color:#000;letter-spacing:0.25px;">-0.4365</span>
<div style="left:416px;top:464px;width:161px;height:26px;background:#ffffff"></div>
<div style="left:576px;top:464px;width:1px;height:26px;background:#c8c8c8"></div>
<span class="t" style="left:418px;top:467px;font-size:16px;color:#000;letter-spacing:0.25px;">0.0</span>
<div style="left:577px;top:464px;width:155px;height:26px;background:#ffffff"></div>
<div style="left:731px;top:464px;width:1px;height:26px;background:#c8c8c8"></div>
<span class="t" style="left:579px;top:467px;font-size:16px;color:#000;letter-spacing:0.25px;">4.718</span>
<div style="left:732px;top:464px;width:155px;height:26px;background:#ffffff"></div>
<div style="left:886px;top:464px;width:1px;height:26px;background:#c8c8c8"></div>
<span class="t" style="left:734px;top:467px;font-size:16px;color:#000;letter-spacing:0.25px;">0.4365</span>
<div style="left:887px;top:464px;width:155px;height:26px;background:#ffffff"></div>
<div style="left:1041px;top:464px;width:1px;height:26px;background:#c8c8c8"></div>
<span class="t" style="left:889px;top:467px;font-size:16px;color:#000;letter-spacing:0.25px;">0.0</span>
<div style="left:1042px;top:464px;width:146px;height:26px;background:#ffffff"></div>
<div style="left:1187px;top:464px;width:1px;height:26px;background:#c8c8c8"></div>
<span class="t" style="left:1044px;top:467px;font-size:16px;color:#000;letter-spacing:0.25px;">2.0</span>
<div style="left:1188px;top:464px;width:123px;height:26px;background:#ffffff"></div>
<div style="left:1310px;top:464px;width:1px;height:26px;background:#c8c8c8"></div>
<span class="t" style="left:1190px;top:467px;font-size:16px;color:#000;letter-spacing:0.25px;">-1</span>
</div></div>
<svg style="left:0;top:0" width="300" height="260" viewBox="0 0 300 260" shape-rendering="crispEdges" fill="#000"><rect x="124" y="212" width="1" height="1"/><rect x="124" y="238" width="1" height="1"/><rect x="126" y="212" width="1" height="1"/><rect x="126" y="238" width="1" height="1"/><rect x="128" y="212" width="1" height="1"/><rect x="128" y="238" width="1" height="1"/><rect x="130" y="212" width="1" height="1"/><rect x="130" y="238" width="1" height="1"/><rect x="132" y="212" width="1" height="1"/><rect x="132" y="238" width="1" height="1"/><rect x="134" y="212" width="1" height="1"/><rect x="134" y="238" width="1" height="1"/><rect x="136" y="212" width="1" height="1"/><rect x="136" y="238" width="1" height="1"/><rect x="138" y="212" width="1" height="1"/><rect x="138" y="238" width="1" height="1"/><rect x="140" y="212" width="1" height="1"/><rect x="140" y="238" width="1" height="1"/><rect x="142" y="212" width="1" height="1"/><rect x="142" y="238" width="1" height="1"/><rect x="144" y="212" width="1" height="1"/><rect x="144" y="238" width="1" height="1"/><rect x="146" y="212" width="1" height="1"/><rect x="146" y="238" width="1" height="1"/><rect x="148" y="212" width="1" height="1"/><rect x="148" y="238" width="1" height="1"/><rect x="150" y="212" width="1" height="1"/><rect x="150" y="238" width="1" height="1"/><rect x="152" y="212" width="1" height="1"/><rect x="152" y="238" width="1" height="1"/><rect x="154" y="212" width="1" height="1"/><rect x="154" y="238" width="1" height="1"/><rect x="156" y="212" width="1" height="1"/><rect x="156" y="238" width="1" height="1"/><rect x="158" y="212" width="1" height="1"/><rect x="158" y="238" width="1" height="1"/><rect x="160" y="212" width="1" height="1"/><rect x="160" y="238" width="1" height="1"/><rect x="162" y="212" width="1" height="1"/><rect x="162" y="238" width="1" height="1"/><rect x="164" y="212" width="1" height="1"/><rect x="164" y="238" width="1" height="1"/><rect x="166" y="212" width="1" height="1"/><rect x="166" y="238" width="1" height="1"/><rect x="168" y="212" width="1" height="1"/><rect x="168" y="238" width="1" height="1"/><rect x="170" y="212" width="1" height="1"/><rect x="170" y="238" width="1" height="1"/><rect x="172" y="212" width="1" height="1"/><rect x="172" y="238" width="1" height="1"/><rect x="174" y="212" width="1" height="1"/><rect x="174" y="238" width="1" height="1"/><rect x="176" y="212" width="1" height="1"/><rect x="176" y="238" width="1" height="1"/><rect x="178" y="212" width="1" height="1"/><rect x="178" y="238" width="1" height="1"/><rect x="180" y="212" width="1" height="1"/><rect x="180" y="238" width="1" height="1"/><rect x="182" y="212" width="1" height="1"/><rect x="182" y="238" width="1" height="1"/><rect x="184" y="212" width="1" height="1"/><rect x="184" y="238" width="1" height="1"/><rect x="186" y="212" width="1" height="1"/><rect x="186" y="238" width="1" height="1"/><rect x="188" y="212" width="1" height="1"/><rect x="188" y="238" width="1" height="1"/><rect x="190" y="212" width="1" height="1"/><rect x="190" y="238" width="1" height="1"/><rect x="192" y="212" width="1" height="1"/><rect x="192" y="238" width="1" height="1"/><rect x="194" y="212" width="1" height="1"/><rect x="194" y="238" width="1" height="1"/><rect x="196" y="212" width="1" height="1"/><rect x="196" y="238" width="1" height="1"/><rect x="198" y="212" width="1" height="1"/><rect x="198" y="238" width="1" height="1"/><rect x="200" y="212" width="1" height="1"/><rect x="200" y="238" width="1" height="1"/><rect x="202" y="212" width="1" height="1"/><rect x="202" y="238" width="1" height="1"/><rect x="204" y="212" width="1" height="1"/><rect x="204" y="238" width="1" height="1"/><rect x="206" y="212" width="1" height="1"/><rect x="206" y="238" width="1" height="1"/><rect x="208" y="212" width="1" height="1"/><rect x="208" y="238" width="1" height="1"/><rect x="210" y="212" width="1" height="1"/><rect x="210" y="238" width="1" height="1"/><rect x="212" y="212" width="1" height="1"/><rect x="212" y="238" width="1" height="1"/><rect x="214" y="212" width="1" height="1"/><rect x="214" y="238" width="1" height="1"/><rect x="216" y="212" width="1" height="1"/><rect x="216" y="238" width="1" height="1"/><rect x="218" y="212" width="1" height="1"/><rect x="218" y="238" width="1" height="1"/><rect x="220" y="212" width="1" height="1"/><rect x="220" y="238" width="1" height="1"/><rect x="222" y="212" width="1" height="1"/><rect x="222" y="238" width="1" height="1"/><rect x="224" y="212" width="1" height="1"/><rect x="224" y="238" width="1" height="1"/><rect x="226" y="212" width="1" height="1"/><rect x="226" y="238" width="1" height="1"/><rect x="228" y="212" width="1" height="1"/><rect x="228" y="238" width="1" height="1"/><rect x="230" y="212" width="1" height="1"/><rect x="230" y="238" width="1" height="1"/><rect x="232" y="212" width="1" height="1"/><rect x="232" y="238" width="1" height="1"/><rect x="234" y="212" width="1" height="1"/><rect x="234" y="238" width="1" height="1"/><rect x="236" y="212" width="1" height="1"/><rect x="236" y="238" width="1" height="1"/><rect x="238" y="212" width="1" height="1"/><rect x="238" y="238" width="1" height="1"/><rect x="240" y="212" width="1" height="1"/><rect x="240" y="238" width="1" height="1"/><rect x="242" y="212" width="1" height="1"/><rect x="242" y="238" width="1" height="1"/><rect x="244" y="212" width="1" height="1"/><rect x="244" y="238" width="1" height="1"/><rect x="246" y="212" width="1" height="1"/><rect x="246" y="238" width="1" height="1"/><rect x="248" y="212" width="1" height="1"/><rect x="248" y="238" width="1" height="1"/><rect x="250" y="212" width="1" height="1"/><rect x="250" y="238" width="1" height="1"/><rect x="252" y="212" width="1" height="1"/><rect x="252" y="238" width="1" height="1"/><rect x="254" y="212" width="1" height="1"/><rect x="254" y="238" width="1" height="1"/><rect x="256" y="212" width="1" height="1"/><rect x="256" y="238" width="1" height="1"/><rect x="258" y="212" width="1" height="1"/><rect x="258" y="238" width="1" height="1"/><rect x="260" y="212" width="1" height="1"/><rect x="260" y="238" width="1" height="1"/><rect x="262" y="212" width="1" height="1"/><rect x="262" y="238" width="1" height="1"/><rect x="264" y="212" width="1" height="1"/><rect x="264" y="238" width="1" height="1"/><rect x="266" y="212" width="1" height="1"/><rect x="266" y="238" width="1" height="1"/><rect x="268" y="212" width="1" height="1"/><rect x="268" y="238" width="1" height="1"/><rect x="123" y="213" width="1" height="1"/><rect x="269" y="213" width="1" height="1"/><rect x="123" y="215" width="1" height="1"/><rect x="269" y="215" width="1" height="1"/><rect x="123" y="217" width="1" height="1"/><rect x="269" y="217" width="1" height="1"/><rect x="123" y="219" width="1" height="1"/><rect x="269" y="219" width="1" height="1"/><rect x="123" y="221" width="1" height="1"/><rect x="269" y="221" width="1" height="1"/><rect x="123" y="223" width="1" height="1"/><rect x="269" y="223" width="1" height="1"/><rect x="123" y="225" width="1" height="1"/><rect x="269" y="225" width="1" height="1"/><rect x="123" y="227" width="1" height="1"/><rect x="269" y="227" width="1" height="1"/><rect x="123" y="229" width="1" height="1"/><rect x="269" y="229" width="1" height="1"/><rect x="123" y="231" width="1" height="1"/><rect x="269" y="231" width="1" height="1"/><rect x="123" y="233" width="1" height="1"/><rect x="269" y="233" width="1" height="1"/><rect x="123" y="235" width="1" height="1"/><rect x="269" y="235" width="1" height="1"/><rect x="123" y="237" width="1" height="1"/><rect x="269" y="237" width="1" height="1"/></svg>
<div style="left:1344px;top:184px;width:18px;height:306px;background:linear-gradient(90deg,#e6e6e6,#f0f0f0 20%,#f2f2f2 50%,#f0f0f0 80%,#e6e6e6)"></div>
<svg style="left:1349px;top:190px" width="9" height="7" viewBox="0 0 9 7"><defs><linearGradient id="ga" x1="0" y1="0" x2="1" y2="1"><stop offset="0" stop-color="#000"/><stop offset="1" stop-color="#9a9a9a"/></linearGradient></defs><path d="M1 5.5 L4.5 1.5 L8 5.5 Z" fill="url(#ga)"/></svg>
<svg style="left:1349px;top:478px" width="9" height="7" viewBox="0 0 9 7"><path d="M1 1 L8 1 L4.5 5 Z" fill="url(#ga)"/></svg>
<div style="left:1345px;top:202px;width:15px;height:15px;border:1px solid #9a9a9a;border-radius:2px;box-sizing:border-box;background:linear-gradient(90deg,#f6f6f6,#eaeaea 45%,#dadadc 50%,#cfcfd3)"></div>
<span class="t" style="left:8px;top:505px;font-size:16px;color:#000;letter-spacing:0.364px;">Источников 1</span>
<div style="left:4px;top:532px;width:571px;height:1px;background:#a0a0a0"></div>
<div style="left:4px;top:532px;width:1px;height:188px;background:#a0a0a0"></div>
<div style="left:5px;top:533px;width:569px;height:1px;background:#696969"></div>
<div style="left:5px;top:533px;width:1px;height:186px;background:#696969"></div>
<div style="left:4px;top:719px;width:571px;height:1px;background:#ffffff"></div>
<div style="left:574px;top:532px;width:1px;height:188px;background:#ffffff"></div>
<div style="left:5px;top:718px;width:569px;height:1px;background:#f0f0f0"></div>
<div style="left:573px;top:533px;width:1px;height:186px;background:#f0f0f0"></div>
<div style="left:6px;top:534px;width:567px;height:184px;background:#ffffff"></div>
<div style="left:6px;top:534px;width:567px;height:184px;background:#ffffff"></div>
<div style="left:6px;top:534px;width:129px;height:28px;background:#f0f0f0"></div>
<div style="left:6px;top:534px;width:129px;height:1px;background:#ffffff"></div>
<div style="left:6px;top:534px;width:1px;height:28px;background:#ffffff"></div>
<div style="left:133px;top:535px;width:1px;height:26px;background:#a0a0a0"></div>
<div style="left:134px;top:534px;width:1px;height:28px;background:#000"></div>
<div style="left:7px;top:560px;width:127px;height:1px;background:#a0a0a0"></div>
<div style="left:6px;top:561px;width:129px;height:1px;background:#000"></div>
<span class="t" style="left:6px;width:128px;text-align:center;top:537px;font-size:16px;color:#000;letter-spacing:0.25px;">No.</span>
<div style="left:135px;top:534px;width:120px;height:28px;background:#f0f0f0"></div>
<div style="left:135px;top:534px;width:120px;height:1px;background:#ffffff"></div>
<div style="left:135px;top:534px;width:1px;height:28px;background:#ffffff"></div>
<div style="left:253px;top:535px;width:1px;height:26px;background:#a0a0a0"></div>
<div style="left:254px;top:534px;width:1px;height:28px;background:#000"></div>
<div style="left:136px;top:560px;width:118px;height:1px;background:#a0a0a0"></div>
<div style="left:135px;top:561px;width:120px;height:1px;background:#000"></div>
<span class="t" style="left:135px;width:119px;text-align:center;top:537px;font-size:16px;color:#000;letter-spacing:0.25px;">PULSE</span>
<div style="left:255px;top:534px;width:150px;height:28px;background:#f0f0f0"></div>
<div style="left:255px;top:534px;width:150px;height:1px;background:#ffffff"></div>
<div style="left:255px;top:534px;width:1px;height:28px;background:#ffffff"></div>
<div style="left:403px;top:535px;width:1px;height:26px;background:#a0a0a0"></div>
<div style="left:404px;top:534px;width:1px;height:28px;background:#000"></div>
<div style="left:256px;top:560px;width:148px;height:1px;background:#a0a0a0"></div>
<div style="left:255px;top:561px;width:150px;height:1px;background:#000"></div>
<span class="t" style="left:255px;width:149px;text-align:center;top:537px;font-size:16px;color:#000;letter-spacing:0.25px;">Volt. V</span>
<div style="left:405px;top:534px;width:129px;height:28px;background:#f0f0f0"></div>
<div style="left:405px;top:534px;width:129px;height:1px;background:#ffffff"></div>
<div style="left:405px;top:534px;width:1px;height:28px;background:#ffffff"></div>
<div style="left:532px;top:535px;width:1px;height:26px;background:#a0a0a0"></div>
<div style="left:533px;top:534px;width:1px;height:28px;background:#000"></div>
<div style="left:406px;top:560px;width:127px;height:1px;background:#a0a0a0"></div>
<div style="left:405px;top:561px;width:129px;height:1px;background:#000"></div>
<span class="t" style="left:405px;width:128px;text-align:center;top:537px;font-size:16px;color:#000;letter-spacing:0.25px;">Phase dg</span>
<div style="left:6px;top:562px;width:129px;height:28px;background:#f0f0f0"></div>
<div style="left:6px;top:562px;width:129px;height:1px;background:#ffffff"></div>
<div style="left:6px;top:562px;width:1px;height:28px;background:#ffffff"></div>
<div style="left:133px;top:563px;width:1px;height:26px;background:#a0a0a0"></div>
<div style="left:7px;top:588px;width:127px;height:1px;background:#a0a0a0"></div>
<div style="left:134px;top:562px;width:1px;height:28px;background:#000"></div>
<div style="left:6px;top:589px;width:129px;height:1px;background:#000"></div>
<span class="t" style="left:8px;top:565px;font-size:16px;color:#000;letter-spacing:0.25px;">1</span>
<div style="left:135px;top:562px;width:120px;height:28px;background:#ffffff"></div>
<div style="left:254px;top:562px;width:1px;height:28px;background:#c8c8c8"></div>
<div style="left:135px;top:589px;width:120px;height:1px;background:#c8c8c8"></div>
<span class="t" style="left:137px;top:565px;font-size:16px;color:#000;letter-spacing:0.25px;">w2c</span>
<div style="left:255px;top:562px;width:150px;height:28px;background:#ffffff"></div>
<div style="left:404px;top:562px;width:1px;height:28px;background:#c8c8c8"></div>
<div style="left:255px;top:589px;width:150px;height:1px;background:#c8c8c8"></div>
<span class="t" style="left:257px;top:565px;font-size:16px;color:#000;letter-spacing:0.25px;">1.0</span>
<div style="left:405px;top:562px;width:129px;height:28px;background:#ffffff"></div>
<div style="left:533px;top:562px;width:1px;height:28px;background:#c8c8c8"></div>
<div style="left:405px;top:589px;width:129px;height:1px;background:#c8c8c8"></div>
<span class="t" style="left:407px;top:565px;font-size:16px;color:#000;letter-spacing:0.25px;">0.0</span>
<div style="left:6px;top:590px;width:129px;height:28px;background:#f0f0f0"></div>
<div style="left:6px;top:590px;width:129px;height:1px;background:#ffffff"></div>
<div style="left:6px;top:590px;width:1px;height:28px;background:#ffffff"></div>
<div style="left:133px;top:591px;width:1px;height:26px;background:#a0a0a0"></div>
<div style="left:7px;top:616px;width:127px;height:1px;background:#a0a0a0"></div>
<div style="left:134px;top:590px;width:1px;height:28px;background:#000"></div>
<div style="left:6px;top:617px;width:129px;height:1px;background:#000"></div>
<div style="left:135px;top:590px;width:120px;height:28px;background:#ffffff"></div>
<div style="left:254px;top:590px;width:1px;height:28px;background:#c8c8c8"></div>
<div style="left:135px;top:617px;width:120px;height:1px;background:#c8c8c8"></div>
<div style="left:255px;top:590px;width:150px;height:28px;background:#ffffff"></div>
<div style="left:404px;top:590px;width:1px;height:28px;background:#c8c8c8"></div>
<div style="left:255px;top:617px;width:150px;height:1px;background:#c8c8c8"></div>
<div style="left:405px;top:590px;width:129px;height:28px;background:#ffffff"></div>
<div style="left:533px;top:590px;width:1px;height:28px;background:#c8c8c8"></div>
<div style="left:405px;top:617px;width:129px;height:1px;background:#c8c8c8"></div>
<span class="t" style="left:13px;top:593px;font-size:16px;color:#000;letter-spacing:1.0px;">след.</span>
<span class="t" style="left:593px;top:505px;font-size:16px;color:#000;letter-spacing:0.316px;">Нагрузок 0 (L - uH; C - pF; R/jX - Ohm)</span>
<div style="left:1079px;top:508px;width:13px;height:13px;border:1px solid #8e8f8f;box-sizing:border-box;background:#f8f8f8"></div>
<div style="left:1081px;top:510px;width:9px;height:9px;border:1px solid;border-color:#b4b8be #d4d6da #e4e4e4 #c4c8ce;box-sizing:border-box;background:linear-gradient(135deg,#c6cad0,#f6f6f6)"></div>
<span class="t" style="left:1101px;top:505px;font-size:16px;color:#000;letter-spacing:0.438px;">Включить нагрузки</span>
<div style="left:587px;top:534px;width:770px;height:1px;background:#a0a0a0"></div>
<div style="left:587px;top:534px;width:1px;height:189px;background:#a0a0a0"></div>
<div style="left:588px;top:535px;width:768px;height:1px;background:#696969"></div>
<div style="left:588px;top:535px;width:1px;height:187px;background:#696969"></div>
<div style="left:587px;top:722px;width:770px;height:1px;background:#ffffff"></div>
<div style="left:1356px;top:534px;width:1px;height:189px;background:#ffffff"></div>
<div style="left:588px;top:721px;width:768px;height:1px;background:#f0f0f0"></div>
<div style="left:1355px;top:535px;width:1px;height:187px;background:#f0f0f0"></div>
<div style="left:589px;top:536px;width:766px;height:185px;background:#ffffff"></div>
<div style="left:589px;top:536px;width:766px;height:169px;overflow:hidden">
<div style="left:-589px;top:-536px;width:1366px;height:768px">
<div style="left:589px;top:536px;width:766px;height:169px;background:#ffffff"></div>
<div style="left:589px;top:536px;width:114px;height:28px;background:#f0f0f0"></div>
<div style="left:589px;top:536px;width:114px;height:1px;background:#ffffff"></div>
<div style="left:589px;top:536px;width:1px;height:28px;background:#ffffff"></div>
<div style="left:701px;top:537px;width:1px;height:26px;background:#a0a0a0"></div>
<div style="left:702px;top:536px;width:1px;height:28px;background:#000"></div>
<div style="left:590px;top:562px;width:112px;height:1px;background:#a0a0a0"></div>
<div style="left:589px;top:563px;width:114px;height:1px;background:#000"></div>
<span class="t" style="left:589px;width:113px;text-align:center;top:539px;font-size:16px;color:#000;letter-spacing:0.25px;">No.</span>
<div style="left:703px;top:536px;width:107px;height:28px;background:#f0f0f0"></div>
<div style="left:703px;top:536px;width:107px;height:1px;background:#ffffff"></div>
<div style="left:703px;top:536px;width:1px;height:28px;background:#ffffff"></div>
<div style="left:808px;top:537px;width:1px;height:26px;background:#a0a0a0"></div>
<div style="left:809px;top:536px;width:1px;height:28px;background:#000"></div>
<div style="left:704px;top:562px;width:105px;height:1px;background:#a0a0a0"></div>
<div style="left:703px;top:563px;width:107px;height:1px;background:#000"></div>
<span class="t" style="left:703px;width:106px;text-align:center;top:539px;font-size:16px;color:#000;letter-spacing:0.25px;">PULSE</span>
<div style="left:810px;top:536px;width:98px;height:28px;background:#f0f0f0"></div>
<div style="left:810px;top:536px;width:98px;height:1px;background:#ffffff"></div>
<div style="left:810px;top:536px;width:1px;height:28px;background:#ffffff"></div>
<div style="left:906px;top:537px;width:1px;height:26px;background:#a0a0a0"></div>
<div style="left:907px;top:536px;width:1px;height:28px;background:#000"></div>
<div style="left:811px;top:562px;width:96px;height:1px;background:#a0a0a0"></div>
<div style="left:810px;top:563px;width:98px;height:1px;background:#000"></div>
<span class="t" style="left:810px;width:97px;text-align:center;top:539px;font-size:16px;color:#000;letter-spacing:0.25px;">Type</span>
<div style="left:908px;top:536px;width:125px;height:28px;background:#f0f0f0"></div>
<div style="left:908px;top:536px;width:125px;height:1px;background:#ffffff"></div>
<div style="left:908px;top:536px;width:1px;height:28px;background:#ffffff"></div>
<div style="left:1031px;top:537px;width:1px;height:26px;background:#a0a0a0"></div>
<div style="left:1032px;top:536px;width:1px;height:28px;background:#000"></div>
<div style="left:909px;top:562px;width:123px;height:1px;background:#a0a0a0"></div>
<div style="left:908px;top:563px;width:125px;height:1px;background:#000"></div>
<span class="t" style="left:908px;width:124px;text-align:center;top:539px;font-size:16px;color:#000;letter-spacing:0.25px;">L/R/A0</span>
<div style="left:1033px;top:536px;width:102px;height:28px;background:#f0f0f0"></div>
<div style="left:1033px;top:536px;width:102px;height:1px;background:#ffffff"></div>
<div style="left:1033px;top:536px;width:1px;height:28px;background:#ffffff"></div>
<div style="left:1133px;top:537px;width:1px;height:26px;background:#a0a0a0"></div>
<div style="left:1134px;top:536px;width:1px;height:28px;background:#000"></div>
<div style="left:1034px;top:562px;width:100px;height:1px;background:#a0a0a0"></div>
<div style="left:1033px;top:563px;width:102px;height:1px;background:#000"></div>
<span class="t" style="left:1033px;width:101px;text-align:center;top:539px;font-size:16px;color:#000;letter-spacing:0.25px;">C/jX/B0</span>
<div style="left:1135px;top:536px;width:113px;height:28px;background:#f0f0f0"></div>
<div style="left:1135px;top:536px;width:113px;height:1px;background:#ffffff"></div>
<div style="left:1135px;top:536px;width:1px;height:28px;background:#ffffff"></div>
<div style="left:1246px;top:537px;width:1px;height:26px;background:#a0a0a0"></div>
<div style="left:1247px;top:536px;width:1px;height:28px;background:#000"></div>
<div style="left:1136px;top:562px;width:111px;height:1px;background:#a0a0a0"></div>
<div style="left:1135px;top:563px;width:113px;height:1px;background:#000"></div>
<span class="t" style="left:1135px;width:112px;text-align:center;top:539px;font-size:16px;color:#000;letter-spacing:0.25px;">Q/A1</span>
<div style="left:1248px;top:536px;width:107px;height:28px;background:#f0f0f0"></div>
<div style="left:1248px;top:536px;width:107px;height:1px;background:#ffffff"></div>
<div style="left:1248px;top:536px;width:1px;height:28px;background:#ffffff"></div>
<div style="left:1249px;top:562px;width:105px;height:1px;background:#a0a0a0"></div>
<div style="left:1248px;top:563px;width:107px;height:1px;background:#000"></div>
<span class="t" style="left:1248px;width:122px;text-align:center;top:539px;font-size:16px;color:#000;letter-spacing:0.25px;">F/B1</span>
<div style="left:589px;top:564px;width:114px;height:28px;background:#f0f0f0"></div>
<div style="left:589px;top:564px;width:114px;height:1px;background:#ffffff"></div>
<div style="left:589px;top:564px;width:1px;height:28px;background:#ffffff"></div>
<div style="left:701px;top:565px;width:1px;height:26px;background:#a0a0a0"></div>
<div style="left:590px;top:590px;width:112px;height:1px;background:#a0a0a0"></div>
<div style="left:702px;top:564px;width:1px;height:28px;background:#000"></div>
<div style="left:589px;top:591px;width:114px;height:1px;background:#000"></div>
<div style="left:703px;top:564px;width:107px;height:28px;background:#ffffff"></div>
<div style="left:809px;top:564px;width:1px;height:28px;background:#c8c8c8"></div>
<div style="left:703px;top:591px;width:107px;height:1px;background:#c8c8c8"></div>
<div style="left:810px;top:564px;width:98px;height:28px;background:#ffffff"></div>
<div style="left:907px;top:564px;width:1px;height:28px;background:#c8c8c8"></div>
<div style="left:810px;top:591px;width:98px;height:1px;background:#c8c8c8"></div>
<div style="left:908px;top:564px;width:125px;height:28px;background:#ffffff"></div>
<div style="left:1032px;top:564px;width:1px;height:28px;background:#c8c8c8"></div>
<div style="left:908px;top:591px;width:125px;height:1px;background:#c8c8c8"></div>
<div style="left:1033px;top:564px;width:102px;height:28px;background:#ffffff"></div>
<div style="left:1134px;top:564px;width:1px;height:28px;background:#c8c8c8"></div>
<div style="left:1033px;top:591px;width:102px;height:1px;background:#c8c8c8"></div>
<div style="left:1135px;top:564px;width:113px;height:28px;background:#ffffff"></div>
<div style="left:1247px;top:564px;width:1px;height:28px;background:#c8c8c8"></div>
<div style="left:1135px;top:591px;width:113px;height:1px;background:#c8c8c8"></div>
<div style="left:1248px;top:564px;width:107px;height:28px;background:#ffffff"></div>
<div style="left:1248px;top:591px;width:107px;height:1px;background:#c8c8c8"></div>
</div></div>
<span class="t" style="left:595px;top:568px;font-size:16px;color:#000;letter-spacing:1.25px;">след.</span>
<div style="left:589px;top:705px;width:766px;height:16px;background:linear-gradient(#e8e8e8,#f2f2f2 30%,#f2f2f2 70%,#e8e8e8)"></div>
<svg style="left:594px;top:708px" width="6" height="9" viewBox="0 0 6 9"><path d="M5 1 L1 4.5 L5 8 Z" fill="url(#ga)"/></svg>
<svg style="left:1344px;top:708px" width="6" height="9" viewBox="0 0 6 9"><path d="M1 1 L5 4.5 L1 8 Z" fill="url(#ga)"/></svg>
<div style="left:607px;top:705px;width:15px;height:15px;border:1px solid #9a9a9a;border-radius:2px;box-sizing:border-box;background:linear-gradient(#f6f6f6,#eaeaea 45%,#dadadc 50%,#cfcfd3)"></div>
<div style="left:0px;top:728px;width:1366px;height:1px;background:#2b3a4c"></div>
<div style="left:0px;top:729px;width:1366px;height:39px;background:linear-gradient(90deg,#7c8ea6 0px,#7f91a9 60px,#a6bfdb 110px,#a7c0dc 968px,#8195ae 1004px,#8195ae 1366px)"></div>
<div style="left:0px;top:729px;width:1366px;height:1px;background:#b9cde3"></div>
<svg style="left:7px;top:728px" width="40" height="40" viewBox="0 0 40 40">
<defs>
<linearGradient id="orbtop" x1="0" y1="0" x2="0" y2="1"><stop offset="0" stop-color="#e6eef3"/><stop offset="0.55" stop-color="#9fb5c6"/><stop offset="1" stop-color="#5f7f9c"/></linearGradient>
<radialGradient id="orbbot" cx="50%" cy="100%" r="75%"><stop offset="0" stop-color="#00e4ff"/><stop offset="0.45" stop-color="#0a8fd0"/><stop offset="1" stop-color="#06447c"/></radialGradient>
<clipPath id="orbclip"><circle cx="20" cy="19.8" r="17.6"/></clipPath>
</defs>
<circle cx="20" cy="19.8" r="18.2" fill="#0a3c6e" stroke="#c6d3df" stroke-width="0.8"/>
<g clip-path="url(#orbclip)">
<rect x="0" y="0" width="40" height="40" fill="url(#orbbot)"/>
<path d="M1 19 Q20 12 39 19 L39 0 L1 0 Z" fill="url(#orbtop)"/>
</g>
<path d="M11 10.5 Q15.5 8 21.5 10.5 L19.5 19 Q14 16.5 9 19 Z" fill="#f0641e"/>
<path d="M11.5 11 Q15.5 9 20.5 11 L19.5 15 Q14.5 13 10.5 15 Z" fill="#e8401a" opacity="0.6"/>
<path d="M22.5 11 Q27.5 14 33 11.5 L31 20.5 Q26 22.5 20.5 19.5 Z" fill="#8cc43c"/>
<path d="M8.5 20 Q14 17.5 19.2 20 L17.2 28.5 Q12 26 6.5 28.5 Z" fill="#2a9be0"/>
<path d="M20.2 20.5 Q25.5 23.5 30.8 21.5 L29 30.5 Q23.5 32 18.5 29 Z" fill="#fdb813"/>
</svg>
<svg style="left:58px;top:733px" width="9" height="30" viewBox="0 0 9 30"><rect x="0" y="0" width="2" height="2" fill="#2a2f37"/><rect x="1" y="2" width="1" height="1" fill="#b8c2cc" opacity="0.5"/><rect x="3" y="0" width="2" height="2" fill="#2a2f37"/><rect x="4" y="2" width="1" height="1" fill="#b8c2cc" opacity="0.5"/><rect x="6" y="0" width="2" height="2" fill="#2a2f37"/><rect x="7" y="2" width="1" height="1" fill="#b8c2cc" opacity="0.5"/><rect x="0" y="4" width="2" height="2" fill="#2a2f37"/><rect x="1" y="6" width="1" height="1" fill="#b8c2cc" opacity="0.5"/><rect x="3" y="4" width="2" height="2" fill="#2a2f37"/><rect x="4" y="6" width="1" height="1" fill="#b8c2cc" opacity="0.5"/><rect x="6" y="4" width="2" height="2" fill="#2a2f37"/><rect x="7" y="6" width="1" height="1" fill="#b8c2cc" opacity="0.5"/><rect x="0" y="8" width="2" height="2" fill="#2a2f37"/><rect x="1" y="10" width="1" height="1" fill="#b8c2cc" opacity="0.5"/><rect x="3" y="8" width="2" height="2" fill="#2a2f37"/><rect x="4" y="10" width="1" height="1" fill="#b8c2cc" opacity="0.5"/><rect x="6" y="8" width="2" height="2" fill="#2a2f37"/><rect x="7" y="10" width="1" height="1" fill="#b8c2cc" opacity="0.5"/><rect x="0" y="12" width="2" height="2" fill="#2a2f37"/><rect x="1" y="14" width="1" height="1" fill="#b8c2cc" opacity="0.5"/><rect x="3" y="12" width="2" height="2" fill="#2a2f37"/><rect x="4" y="14" width="1" height="1" fill="#b8c2cc" opacity="0.5"/><rect x="6" y="12" width="2" height="2" fill="#2a2f37"/><rect x="7" y="14" width="1" height="1" fill="#b8c2cc" opacity="0.5"/><rect x="0" y="16" width="2" height="2" fill="#2a2f37"/><rect x="1" y="18" width="1" height="1" fill="#b8c2cc" opacity="0.5"/><rect x="3" y="16" width="2" height="2" fill="#2a2f37"/><rect x="4" y="18" width="1" height="1" fill="#b8c2cc" opacity="0.5"/><rect x="6" y="16" width="2" height="2" fill="#2a2f37"/><rect x="7" y="18" width="1" height="1" fill="#b8c2cc" opacity="0.5"/><rect x="0" y="20" width="2" height="2" fill="#2a2f37"/><rect x="1" y="22" width="1" height="1" fill="#b8c2cc" opacity="0.5"/><rect x="3" y="20" width="2" height="2" fill="#2a2f37"/><rect x="4" y="22" width="1" height="1" fill="#b8c2cc" opacity="0.5"/><rect x="6" y="20" width="2" height="2" fill="#2a2f37"/><rect x="7" y="22" width="1" height="1" fill="#b8c2cc" opacity="0.5"/><rect x="0" y="24" width="2" height="2" fill="#2a2f37"/><rect x="1" y="26" width="1" height="1" fill="#b8c2cc" opacity="0.5"/><rect x="3" y="24" width="2" height="2" fill="#2a2f37"/><rect x="4" y="26" width="1" height="1" fill="#b8c2cc" opacity="0.5"/><rect x="6" y="24" width="2" height="2" fill="#2a2f37"/><rect x="7" y="26" width="1" height="1" fill="#b8c2cc" opacity="0.5"/><rect x="0" y="28" width="2" height="2" fill="#2a2f37"/><rect x="1" y="30" width="1" height="1" fill="#b8c2cc" opacity="0.5"/><rect x="3" y="28" width="2" height="2" fill="#2a2f37"/><rect x="4" y="30" width="1" height="1" fill="#b8c2cc" opacity="0.5"/><rect x="6" y="28" width="2" height="2" fill="#2a2f37"/><rect x="7" y="30" width="1" height="1" fill="#b8c2cc" opacity="0.5"/></svg>
<svg style="left:1012px;top:733px" width="9" height="30" viewBox="0 0 9 30"><rect x="0" y="0" width="2" height="2" fill="#2a2f37"/><rect x="1" y="2" width="1" height="1" fill="#b8c2cc" opacity="0.5"/><rect x="3" y="0" width="2" height="2" fill="#2a2f37"/><rect x="4" y="2" width="1" height="1" fill="#b8c2cc" opacity="0.5"/><rect x="6" y="0" width="2" height="2" fill="#2a2f37"/><rect x="7" y="2" width="1" height="1" fill="#b8c2cc" opacity="0.5"/><rect x="0" y="4" width="2" height="2" fill="#2a2f37"/><rect x="1" y="6" width="1" height="1" fill="#b8c2cc" opacity="0.5"/><rect x="3" y="4" width="2" height="2" fill="#2a2f37"/><rect x="4" y="6" width="1" height="1" fill="#b8c2cc" opacity="0.5"/><rect x="6" y="4" width="2" height="2" fill="#2a2f37"/><rect x="7" y="6" width="1" height="1" fill="#b8c2cc" opacity="0.5"/><rect x="0" y="8" width="2" height="2" fill="#2a2f37"/><rect x="1" y="10" width="1" height="1" fill="#b8c2cc" opacity="0.5"/><rect x="3" y="8" width="2" height="2" fill="#2a2f37"/><rect x="4" y="10" width="1" height="1" fill="#b8c2cc" opacity="0.5"/><rect x="6" y="8" width="2" height="2" fill="#2a2f37"/><rect x="7" y="10" width="1" height="1" fill="#b8c2cc" opacity="0.5"/><rect x="0" y="12" width="2" height="2" fill="#2a2f37"/><rect x="1" y="14" width="1" height="1" fill="#b8c2cc" opacity="0.5"/><rect x="3" y="12" width="2" height="2" fill="#2a2f37"/><rect x="4" y="14" width="1" height="1" fill="#b8c2cc" opacity="0.5"/><rect x="6" y="12" width="2" height="2" fill="#2a2f37"/><rect x="7" y="14" width="1" height="1" fill="#b8c2cc" opacity="0.5"/><rect x="0" y="16" width="2" height="2" fill="#2a2f37"/><rect x="1" y="18" width="1" height="1" fill="#b8c2cc" opacity="0.5"/><rect x="3" y="16" width="2" height="2" fill="#2a2f37"/><rect x="4" y="18" width="1" height="1" fill="#b8c2cc" opacity="0.5"/><rect x="6" y="16" width="2" height="2" fill="#2a2f37"/><rect x="7" y="18" width="1" height="1" fill="#b8c2cc" opacity="0.5"/><rect x="0" y="20" width="2" height="2" fill="#2a2f37"/><rect x="1" y="22" width="1" height="1" fill="#b8c2cc" opacity="0.5"/><rect x="3" y="20" width="2" height="2" fill="#2a2f37"/><rect x="4" y="22" width="1" height="1" fill="#b8c2cc" opacity="0.5"/><rect x="6" y="20" width="2" height="2" fill="#2a2f37"/><rect x="7" y="22" width="1" height="1" fill="#b8c2cc" opacity="0.5"/><rect x="0" y="24" width="2" height="2" fill="#2a2f37"/><rect x="1" y="26" width="1" height="1" fill="#b8c2cc" opacity="0.5"/><rect x="3" y="24" width="2" height="2" fill="#2a2f37"/><rect x="4" y="26" width="1" height="1" fill="#b8c2cc" opacity="0.5"/><rect x="6" y="24" width="2" height="2" fill="#2a2f37"/><rect x="7" y="26" width="1" height="1" fill="#b8c2cc" opacity="0.5"/><rect x="0" y="28" width="2" height="2" fill="#2a2f37"/><rect x="1" y="30" width="1" height="1" fill="#b8c2cc" opacity="0.5"/><rect x="3" y="28" width="2" height="2" fill="#2a2f37"/><rect x="4" y="30" width="1" height="1" fill="#b8c2cc" opacity="0.5"/><rect x="6" y="28" width="2" height="2" fill="#2a2f37"/><rect x="7" y="30" width="1" height="1" fill="#b8c2cc" opacity="0.5"/></svg>
<svg style="left:89px;top:732px" width="33" height="33" viewBox="0 0 33 33">
<rect x="0" y="0" width="32" height="32" fill="#c0c4c8"/>
<path d="M2 12 Q2 1 12.5 1 Q23 1 24 11 L24 25 L12 25 Q2 24 2 12 Z" fill="#00e8ff" stroke="#0000ff" stroke-width="1.8" stroke-dasharray="2 1"/>
<path d="M8 9 Q8 5 13 5 Q18 5 18 8 M8 9 Q8 12 13 12 M8 9 V14 Q8 19 13 19" fill="none" stroke="#0000ff" stroke-width="2.2"/>
<circle cx="20.5" cy="21" r="10.5" fill="#ffff00" stroke="#0000ff" stroke-width="1.8" stroke-dasharray="2 1"/>
<path d="M24.5 13.5 H18.5 Q14.5 13.5 14.5 17 Q14.5 20 18 20.5 L14 27 M24.5 13.5 V27 M24 20.5 H18.5" fill="none" stroke="#0000ff" stroke-width="2.6"/>
<path d="M20 2.5 H28 M26 0.5 L29 2.5 L26 5 M12 29.5 H4 M6 27 L3 29.5 L6 31.5" fill="none" stroke="#000" stroke-width="1.8"/>
</svg>
<div style="left:137px;top:729px;width:60px;height:39px;border:1px solid #56657c;border-radius:3px;box-sizing:border-box;background:linear-gradient(160deg,#e3ebf5,#c6d5e7 45%,#b2c6de);box-shadow:inset 0 0 0 1px rgba(255,255,255,.35)"></div>
<div style="left:261px;top:729px;width:60px;height:39px;border:1px solid #56657c;border-radius:3px;box-sizing:border-box;background:linear-gradient(160deg,#e3ebf5,#c6d5e7 45%,#b2c6de);box-shadow:inset 0 0 0 1px rgba(255,255,255,.35)"></div>
<div style="left:324px;top:729px;width:59px;height:39px;border:1px solid #56657c;border-radius:3px;box-sizing:border-box;background:linear-gradient(160deg,#e3ebf5,#c6d5e7 45%,#b2c6de);box-shadow:inset 0 0 0 1px rgba(255,255,255,.35)"></div>
<svg style="left:151px;top:734px" width="33" height="32" viewBox="0 0 33 32">
<path d="M2 3 Q2 1.5 3.5 1.5 H15 L16.5 3.5 H29 Q30.5 3.5 30.5 5 V26 H2 Z" fill="#ecd58a" stroke="#c9a751" stroke-width="0.9"/>
<rect x="4" y="2.5" width="3" height="2" fill="#16b216"/><rect x="7" y="2.5" width="6" height="2" fill="#fff"/>
<path d="M11 6 Q11 5 12 5 H20 L21 6.5 H29.5 V26 H11 Z" fill="#f1dc93" stroke="#c9a751" stroke-width="0.8"/>
<rect x="12.5" y="6" width="3" height="2" fill="#e53b2a"/><rect x="15.5" y="6" width="6" height="2" fill="#fff"/>
<path d="M18 9.5 Q18 8.5 19 8.5 H29.5 Q30.5 8.5 30.5 9.5 V12 H18 Z" fill="#f5e3a3" stroke="#c9a751" stroke-width="0.8"/>
<rect x="20" y="9" width="3" height="2" fill="#2a9be8"/><rect x="23" y="9" width="5" height="2" fill="#fff"/>
<path d="M1.5 11.5 H31.5 V26.5 H1.5 Z" fill="#f7e29a" stroke="#c9a751" stroke-width="0.9"/>
<path d="M4.5 29.5 V20 Q4.5 17 7.5 17 H23.5 Q26.5 17 26.5 20 V29.5 H21.5 V23 H9.5 V29.5 Z" fill="#8fd0f2" stroke="#3c93cf" stroke-width="0.9"/>
<path d="M5.5 21 L9 17.5" stroke="#fff" stroke-width="1.2" opacity="0.9"/>
</svg>
<svg style="left:213px;top:732px" width="32" height="32" viewBox="213 732 32 32">
<rect x="213" y="732" width="32" height="32" fill="#000"/>
<path d="M222.6 738.2 L228.7 745.6" stroke="#ff3000" stroke-width="1.4"/>
<path d="M229 744 L236 736.8 L244.3 740.9 L237.5 747.6 Z" fill="#ffc000" stroke="#ff2000" stroke-width="1.1"/>
<path d="M213.5 750.4 L222.6 744.3 L227.4 749 L218.5 755 Z" fill="#ffc000" stroke="#ff2000" stroke-width="1.1"/>
<circle cx="230.5" cy="751.5" r="4.6" fill="#ffff00" stroke="#ff2000" stroke-width="1.1"/>
<ellipse cx="233.5" cy="757.5" rx="3.6" ry="2.4" fill="#ffd000" stroke="#ff2000" stroke-width="1"/>
</svg>
<svg style="left:275px;top:732px" width="33" height="33" viewBox="0 0 33 33">
<circle cx="16.5" cy="16.5" r="16" fill="#34a853"/>
<path d="M16.5 16.5 L2.6 8.5 A16 16 0 0 1 30.4 8.5 Z" fill="#ea4335"/>
<path d="M16.5 16.5 L30.4 8.5 A16 16 0 0 1 16.5 32.5 Z" fill="#fbbc05"/>
<circle cx="16.5" cy="16.5" r="7.4" fill="#fff"/>
<circle cx="16.5" cy="16.5" r="5.8" fill="#4285f4"/>
</svg>
<svg style="left:336px;top:731px" width="34" height="34" viewBox="0 0 34 34">
<circle cx="17" cy="17" r="15.6" fill="#fff" stroke="#000" stroke-width="1.4"/>
<path d="M3 21 H31 M17 2 V21 M6 8 L28 30 M28 8 L6 30" stroke="#9a9a9a" stroke-width="0.6"/>
<path d="M3.5 20.5 Q3 10 9 9.5 Q14 10 17 20.5 Q20 10 25 9.5 Q31 10 30.5 20.5 Q27 22 24 20.5 Q20 19 17 20.5 Q14 19 10 20.5 Q7 22 3.5 20.5 Z" fill="#f2c2f0" stroke="#c02040" stroke-width="0.8"/>
<path d="M10.5 4.5 Q17 1.5 23.5 4.5 Q25 8 23 10.5 L17.5 20 L16.5 20 L11 10.5 Q9 8 10.5 4.5 Z" fill="#c0bcff" stroke="#3030b0" stroke-width="0.8"/>
<path d="M11 13 H23 M17 3 V21" stroke="#a0a0a0" stroke-width="0.5"/>
<ellipse cx="17" cy="21" rx="1.5" ry="2" fill="#8080e0" stroke="#3030b0" stroke-width="0.6"/>
<text x="17" y="30.5" font-family="Liberation Sans" font-size="8.5" text-anchor="middle" fill="#2828a0" letter-spacing="0.5">v.3</text>
</svg>
<span class="t" style="left:1029px;top:736px;font-size:12px;color:#ececec;letter-spacing:-1.0px;">EN</span>
<svg style="left:1058px;top:740px" width="215" height="18" viewBox="1058 740 215 18">
<ellipse cx="1068" cy="749" rx="7.5" ry="7" fill="#f2c14a" stroke="#c9902a" stroke-width="0.8"/>
<circle cx="1065" cy="746" r="1.7" fill="#e33"/><circle cx="1068" cy="744.5" r="1.7" fill="#3b3"/><circle cx="1071" cy="745.5" r="1.7" fill="#39e"/>
<rect x="1084" y="741" width="16" height="12" fill="#fff"/>
<path d="M1084 742 H1100 M1084 744.5 H1100 M1084 747 H1100 M1084 749.5 H1100 M1084 752 H1100" stroke="#d22" stroke-width="1.2"/>
<rect x="1084" y="741" width="8" height="6" fill="#2b3f8f"/>
<path d="M1085 756.5 H1089 M1090 756.5 H1094 M1095 756.5 H1099" stroke="#fff" stroke-width="1.6"/>
<circle cx="1116" cy="749" r="8" fill="#ef9b2d"/>
<path d="M1112 747 H1120 M1112 751 H1120" stroke="#fff" stroke-width="1.8"/>
<rect x="1132" y="741" width="16" height="14" fill="#ff0000"/>
<path d="M1132 755 L1148 741 V755 Z" fill="#000"/>
<path d="M1134 743 H1141 V745 H1136 V749 H1134 Z" fill="#fff"/>
<path d="M1145 746 H1147 V753 H1139 V751 H1145 Z" fill="#fff"/>
<rect x="1143" y="748" width="2" height="1" fill="#fff"/>
<path d="M1132.5 755 L1148 741.5" stroke="#fff" stroke-width="1.1"/>
<path d="M1157 743 L1164 741 L1171 743 V749 Q1170 754 1164 757 Q1158 754 1157 749 Z" fill="#d8413a"/>
<path d="M1157 743 L1164 741 V749 H1157 Z M1164 749 H1171 Q1170 754 1164 757 Z" fill="#fff" opacity="0.9"/>
<path d="M1181.5 741.5 V756.5" stroke="#333" stroke-width="2.4" stroke-linecap="round"/>
<path d="M1181.5 741.5 V756.5" stroke="#fff" stroke-width="1.1"/>
<path d="M1182.5 742.5 Q1186 741.5 1189 743 Q1192 744.5 1195 743.5 V749 Q1192 750 1189 748.5 Q1186 747 1182.5 748 Z" fill="#f4f4f4" stroke="#444" stroke-width="0.8"/>
<circle cx="1191.2" cy="752.2" r="4.6" fill="#e02a20" stroke="#a01810" stroke-width="0.5"/>
<path d="M1189.2 750.2 L1193.2 754.2 M1193.2 750.2 L1189.2 754.2" stroke="#fff" stroke-width="1.4"/>
<path d="M1205 743 Q1205 742 1206 742 H1212 V756 H1206 Q1205 756 1205 755 Z" fill="#fff" stroke="#222" stroke-width="1.1"/>
<rect x="1206.5" y="744.5" width="3" height="5" fill="#4e5e72"/>
<path d="M1211.5 741.5 V745 M1215 741.5 V745" stroke="#222" stroke-width="1.8"/>
<path d="M1210 745 H1217 V749 Q1217 752 1213.5 752 Q1210 752 1210 749 Z" fill="#fff" stroke="#222" stroke-width="1.1"/>
<path d="M1213.5 752 V757" stroke="#222" stroke-width="2.2"/><path d="M1213.5 752 V757" stroke="#fff" stroke-width="0.9"/>
<path d="M1228.5 746 H1231 L1235 741.5 V756.5 L1231 752 H1228.5 Z" fill="#fff" stroke="#333" stroke-width="0.9"/>
<path d="M1237.5 747 Q1238.5 749 1237.5 751 M1239.8 744.5 Q1241.8 749 1239.8 753.5 M1242 742.5 Q1245 749 1242 755.5" stroke="#fff" stroke-width="1" fill="none"/>
<rect x="1252.5" y="751.5" width="3" height="3" fill="#fff" stroke="#333" stroke-width="0.9"/>
<rect x="1256.5" y="749.5" width="3" height="5" fill="#fff" stroke="#333" stroke-width="0.9"/>
<rect x="1260.5" y="746.5" width="3" height="8" fill="#fff" stroke="#333" stroke-width="0.9"/>
<rect x="1264.5" y="743.5" width="3" height="11" fill="#7d8896" stroke="#333" stroke-width="0.9"/>
</svg>
<span class="t" style="left:1299px;top:731px;font-size:12px;color:#f2f2f2;letter-spacing:-0.5px;">15:16</span>
<span class="t" style="left:1285px;top:748px;font-size:12px;color:#f2f2f2;letter-spacing:-0.667px;">28.10.2024</span>
<div style="left:1351px;top:729px;width:15px;height:39px;background:#3c4a5a"></div>
<div style="left:1352px;top:729px;width:13px;height:38px;border:1px solid #b4c0cc;box-sizing:border-box;background:linear-gradient(#8d97a3 0%,#5c6b7d 35%,#56667a 60%,#6e839b 100%)"></div>
</body></html>
